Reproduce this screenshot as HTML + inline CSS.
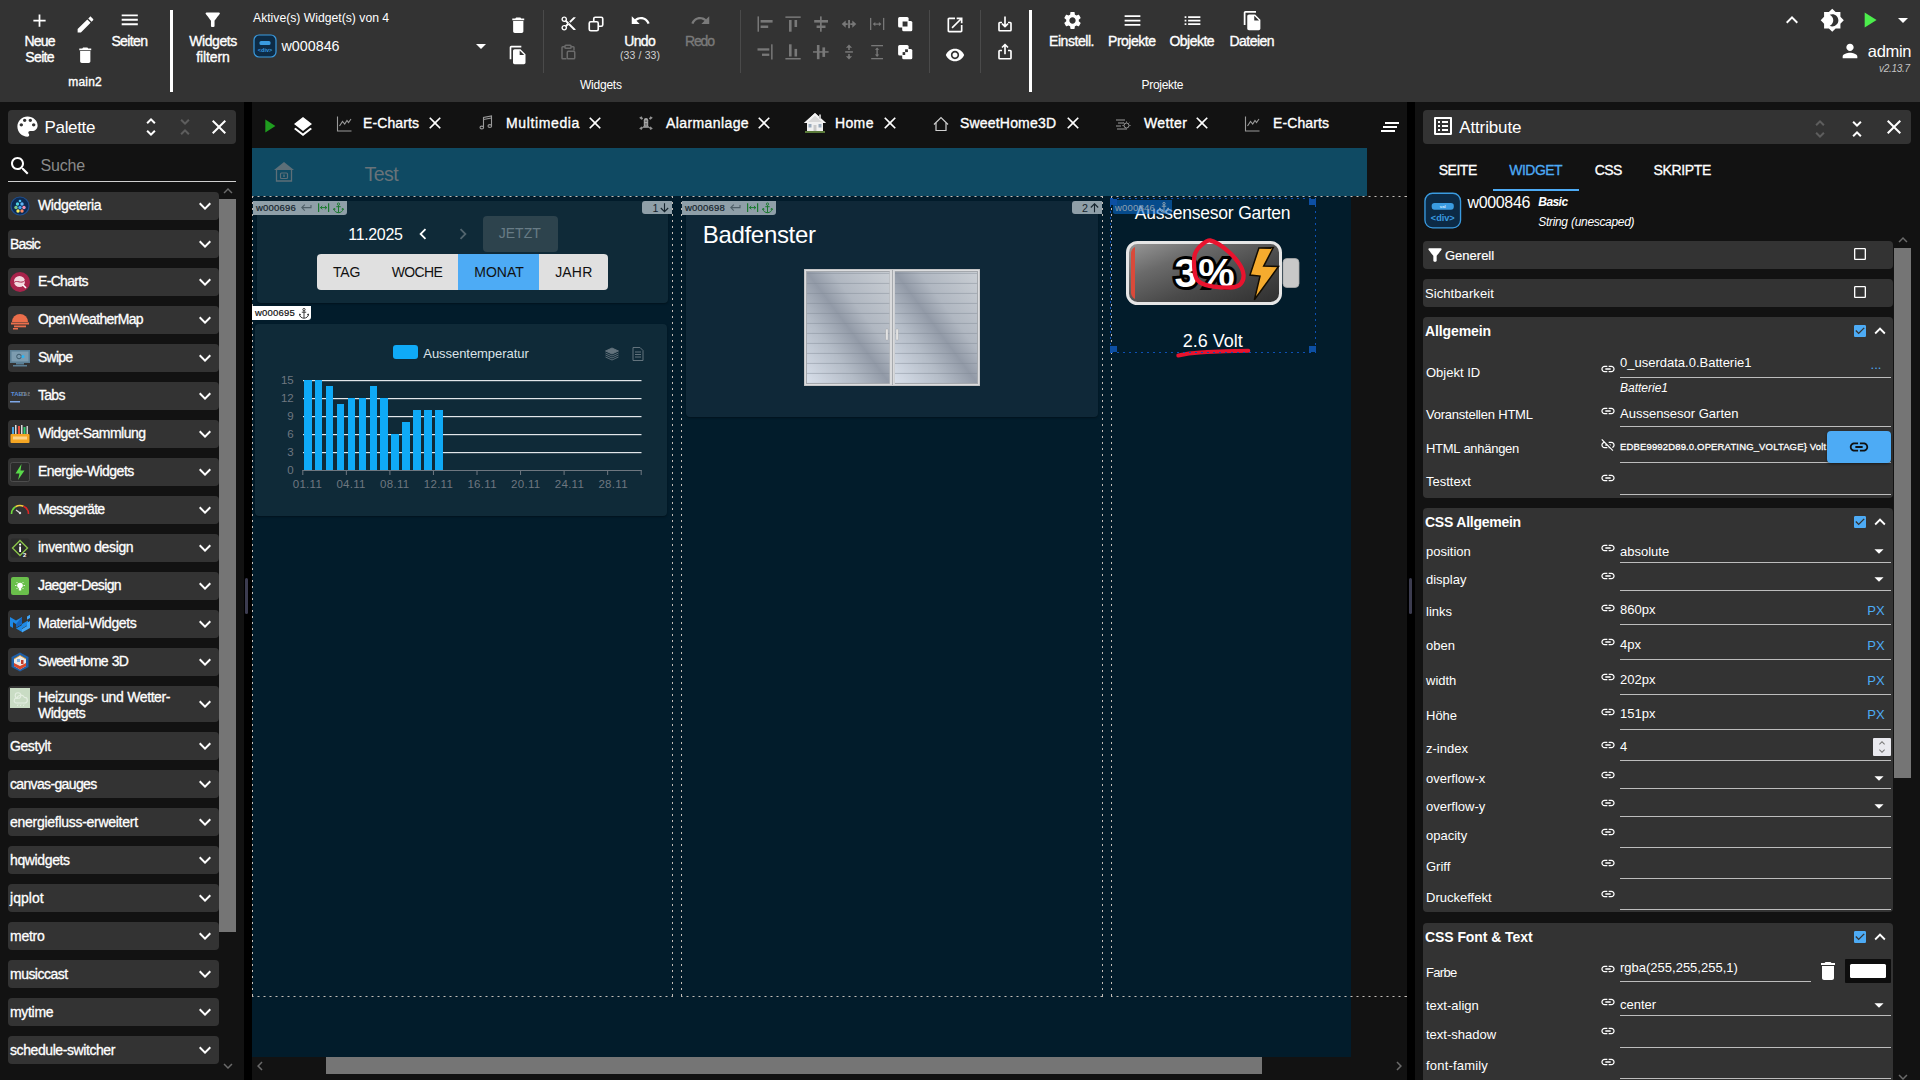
<!DOCTYPE html>
<html lang="de"><head><meta charset="utf-8"><title>vis editor</title>
<style>
html,body{margin:0;padding:0;background:#000;}
html{width:1920px;height:1080px;overflow:hidden;}
body{width:1920px;height:1080px;overflow:hidden;position:relative;font-family:"Liberation Sans",sans-serif;}
.t{position:absolute;white-space:nowrap;line-height:1;}
.i{position:absolute;display:block;}
.r{position:absolute;box-sizing:border-box;}
</style></head><body>
<div class="r" style="left:0px;top:0px;width:1920px;height:102px;background:#333333;"></div>
<svg class="i" style="left:29.200000000000003px;top:9.8px;" width="21" height="21" viewBox="0 0 24 24"><path fill="#fff" d="M19 13h-6v6h-2v-6H5v-2h6V5h2v6h6v2z"/></svg>
<span class="t" style="left:39.5665px;top:41.2px;font-size:14px;color:#ffffff;font-weight:400;transform:translate(-50%,-50%);letter-spacing:-0.867px;-webkit-text-stroke:0.35px #fff;">Neue</span>
<span class="t" style="left:39.669px;top:57.2px;font-size:14px;color:#ffffff;font-weight:400;transform:translate(-50%,-50%);letter-spacing:-0.662px;-webkit-text-stroke:0.35px #fff;">Seite</span>
<svg class="i" style="left:74.5px;top:14.0px;" width="21" height="21" viewBox="0 0 24 24"><path fill="#fff" d="M3 17.25V21h3.75L17.81 9.94l-3.75-3.75L3 17.25zM20.71 7.04c.39-.39.39-1.02 0-1.41l-2.34-2.34c-.39-.39-1.02-.39-1.41 0l-1.83 1.83 3.75 3.75 1.83-1.83z"/></svg>
<svg class="i" style="left:74.75px;top:44.75px;" width="20.5" height="20.5" viewBox="0 0 24 24"><path fill="#fff" d="M6 19c0 1.1.9 2 2 2h8c1.1 0 2-.9 2-2V7H6v12zM19 4h-3.5l-1-1h-5l-1 1H5v2h14V4z"/></svg>
<svg class="i" style="left:119.25px;top:9.25px;" width="21.5" height="21.5" viewBox="0 0 24 24"><path fill="#fff" d="M3 18h18v-2H3v2zm0-5h18v-2H3v2zm0-7v2h18V6H3z"/></svg>
<span class="t" style="left:129.392px;top:41.2px;font-size:14px;color:#ffffff;font-weight:400;transform:translate(-50%,-50%);letter-spacing:-0.616px;-webkit-text-stroke:0.35px #fff;">Seiten</span>
<span class="t" style="left:85.1015px;top:82px;font-size:12px;color:#ffffff;font-weight:400;transform:translate(-50%,-50%);letter-spacing:0.203px;-webkit-text-stroke:0.35px #fff;">main2</span>
<div class="r" style="left:170px;top:10px;width:3px;height:82px;background:#ffffff;"></div>
<svg class="i" style="left:201.95px;top:9.25px;" width="21.5" height="21.5" viewBox="0 0 24 24"><path fill="#fff" d="M4.25 5.61C6.27 8.2 10 13 10 13v6c0 .55.45 1 1 1h2c.55 0 1-.45 1-1v-6s3.72-4.8 5.74-7.39c.51-.66.04-1.61-.79-1.61H5.04c-.83 0-1.3.95-.79 1.61z"/></svg>
<span class="t" style="left:212.99499999999998px;top:41.2px;font-size:14px;color:#ffffff;font-weight:400;transform:translate(-50%,-50%);letter-spacing:-0.41px;-webkit-text-stroke:0.35px #fff;">Widgets</span>
<span class="t" style="left:212.9405px;top:57.2px;font-size:14px;color:#ffffff;font-weight:400;transform:translate(-50%,-50%);letter-spacing:-0.119px;-webkit-text-stroke:0.35px #fff;">filtern</span>
<span class="t" style="left:253px;top:18px;font-size:12.2px;color:#ffffff;font-weight:400;transform:translate(0,-50%);">Aktive(s) Widget(s) von 4</span>
<svg class="i" style="left:253px;top:34px;" width="24" height="24" viewBox="0 0 24 24"><rect x="1" y="1" width="22" height="22" rx="5" fill="#0d2b45" stroke="#3a9be0" stroke-width="1.2"/><rect x="6.5" y="7" width="11" height="4" rx="1.5" fill="#3a9be0"/><text x="12" y="18" font-size="5.5" font-weight="700" fill="#3a9be0" text-anchor="middle" font-family="Liberation Sans, sans-serif">&lt;div&gt;</text></svg>
<span class="t" style="left:281.5px;top:46px;font-size:14.3px;color:#ffffff;font-weight:400;transform:translate(0,-50%);">w000846</span>
<svg class="i" style="left:468.6px;top:34.0px;" width="24" height="24" viewBox="0 0 24 24"><path fill="#fff" d="M7 10l5 5 5-5z"/></svg>
<svg class="i" style="left:508.04999999999995px;top:14.75px;" width="20.5" height="20.5" viewBox="0 0 24 24"><path fill="#fff" d="M6 19c0 1.1.9 2 2 2h8c1.1 0 2-.9 2-2V7H6v12zM19 4h-3.5l-1-1h-5l-1 1H5v2h14V4z"/></svg>
<svg class="i" style="left:508.20000000000005px;top:44.5px;" width="20" height="20" viewBox="0 0 24 24"><path fill="#fff" d="M16 1H4c-1.1 0-2 .9-2 2v14h2V3h12V1zm-1 4l6 6v10c0 1.1-.9 2-2 2H7.99C6.89 23 6 22.1 6 21l.01-14c0-1.1.89-2 1.99-2h7zm-1 7h5.5L14 6.5V12z"/></svg>
<div class="r" style="left:543px;top:10px;width:1px;height:63px;background:#4a4a4a;"></div>
<svg class="i" style="left:559.6px;top:15.3px;" width="17" height="17" viewBox="0 0 24 24"><path fill="#fff" d="M9.64 7.64c.23-.5.36-1.05.36-1.64 0-2.21-1.79-4-4-4S2 3.79 2 6s1.79 4 4 4c.59 0 1.14-.13 1.64-.36L10 12l-2.36 2.36C7.14 14.13 6.59 14 6 14c-2.21 0-4 1.79-4 4s1.79 4 4 4 4-1.79 4-4c0-.59-.13-1.14-.36-1.64L12 14l7 7h3v-1L9.64 7.64zM6 8c-1.1 0-2-.89-2-2s.9-2 2-2 2 .89 2 2-.9 2-2 2zm0 12c-1.1 0-2-.89-2-2s.9-2 2-2 2 .89 2 2-.9 2-2 2zm6-7.5c-.28 0-.5-.22-.5-.5s.22-.5.5-.5.5.22.5.5-.22.5-.5.5zM19 3l-6 6 2 2 7-7V3z"/></svg>
<svg class="i" style="left:587px;top:15px;" width="18" height="18" viewBox="0 0 24 24"><rect x="9" y="3" width="12" height="12" rx="2" fill="none" stroke="#fff" stroke-width="2.2"/><rect x="3" y="9" width="12" height="12" rx="2" fill="#333" stroke="#fff" stroke-width="2.2"/></svg>
<svg class="i" style="left:558.7px;top:43px;" width="18" height="18" viewBox="0 0 24 24"><path d="M8 5H5a1 1 0 0 0-1 1v14a1 1 0 0 0 1 1h5" fill="none" stroke="#6b6b6b" stroke-width="2"/><path d="M16 5h3a1 1 0 0 1 1 1v4" fill="none" stroke="#6b6b6b" stroke-width="2"/><rect x="8" y="3" width="8" height="4" rx="1" fill="none" stroke="#6b6b6b" stroke-width="2"/><rect x="11" y="11" width="10" height="10" rx="1.5" fill="none" stroke="#6b6b6b" stroke-width="2"/></svg>
<svg class="i" style="left:629.5px;top:10.0px;" width="21" height="21" viewBox="0 0 24 24"><path fill="#fff" d="M12.5 8c-2.65 0-5.05.99-6.9 2.6L2 7v9h9l-3.62-3.62c1.39-1.16 3.16-1.88 5.12-1.88 3.54 0 6.55 2.31 7.6 5.5l2.37-.78C21.08 11.03 17.15 8 12.5 8z"/></svg>
<span class="t" style="left:639.6915px;top:41.2px;font-size:14px;color:#ffffff;font-weight:400;transform:translate(-50%,-50%);letter-spacing:-0.617px;-webkit-text-stroke:0.35px #fff;">Undo</span>
<span class="t" style="left:640.0665px;top:55px;font-size:10.5px;color:#d0d0d0;font-weight:400;transform:translate(-50%,-50%);letter-spacing:0.133px;">(33 / 33)</span>
<svg class="i" style="left:689.5px;top:10.0px;" width="21" height="21" viewBox="0 0 24 24"><path fill="#7a7a7a" d="M18.4 10.6C16.55 8.99 14.15 8 11.5 8c-4.65 0-8.58 3.03-9.96 7.22L3.9 16c1.05-3.19 4.05-5.5 7.6-5.5 1.95 0 3.73.72 5.12 1.88L13 16h9V7l-3.6 3.6z"/></svg>
<span class="t" style="left:699.4415px;top:41.2px;font-size:14px;color:#7a7a7a;font-weight:400;transform:translate(-50%,-50%);letter-spacing:-1.117px;-webkit-text-stroke:0.35px #7a7a7a;">Redo</span>
<span class="t" style="left:600.8825px;top:85px;font-size:12px;color:#ffffff;font-weight:400;transform:translate(-50%,-50%);letter-spacing:-0.235px;">Widgets</span>
<div class="r" style="left:740px;top:10px;width:1px;height:63px;background:#4a4a4a;"></div>
<svg class="i" style="left:0;top:0" width="1920" height="70" viewBox="0 0 1920 70"><rect x="757.5" y="16.4" width="1.50" height="15.30" fill="#787878"/><rect x="760.6" y="20" width="12.00" height="2.60" fill="#787878"/><rect x="760.6" y="25.5" width="7.60" height="2.50" fill="#787878"/><rect x="785.4" y="16.4" width="15.30" height="1.50" fill="#787878"/><rect x="789" y="20" width="2.60" height="11.70" fill="#787878"/><rect x="794.5" y="20" width="2.60" height="7.00" fill="#787878"/><rect x="820" y="16.4" width="1.70" height="15.30" fill="#787878"/><rect x="814.2" y="20" width="13.80" height="2.60" fill="#787878"/><rect x="816.6" y="25.5" width="8.90" height="2.50" fill="#787878"/><rect x="848.1" y="20" width="1.90" height="8.20" fill="#787878"/><path d="M841.7 24.1l4-3.600v2.800h2v1.600h-2v2.800zM856.300 24.100l-4-3.600v2.800h-2v1.600h2v2.800z" fill="#787878"/><rect x="870" y="17.9" width="1.30" height="12.10" fill="#787878"/><rect x="883" y="17.9" width="1.30" height="12.10" fill="#787878"/><path d="M872.700 24.100l2.600-2.200v1.600h3.600v-1.600l2.600 2.200-2.600 2.200v-1.600h-3.600v1.600z" fill="#787878"/><rect x="771.1" y="44.3" width="1.50" height="15.20" fill="#787878"/><rect x="757.5" y="48.3" width="11.80" height="2.30" fill="#787878"/><rect x="762" y="53.6" width="7.30" height="2.30" fill="#787878"/><rect x="785.4" y="58" width="15.30" height="1.50" fill="#787878"/><rect x="789" y="44.3" width="2.60" height="12.20" fill="#787878"/><rect x="794.5" y="48.9" width="2.60" height="7.60" fill="#787878"/><rect x="813" y="51.2" width="15.60" height="1.50" fill="#787878"/><rect x="816.9" y="45" width="2.60" height="14.20" fill="#787878"/><rect x="822.4" y="47.4" width="2.70" height="9.50" fill="#787878"/><rect x="845.2" y="51.2" width="7.70" height="1.50" fill="#787878"/><path d="M849 44.500l-3.100 3.300h2.300v2.200h1.600v-2.200h2.300zM849 59.500l-3.100-3.300h2.300v-2.200h1.600v2.200h2.300z" fill="#787878"/><rect x="871.2" y="45" width="11.80" height="1.30" fill="#787878"/><rect x="871.2" y="58" width="11.80" height="1.30" fill="#787878"/><path d="M877.100 47.400l-2.200 2.400h1.500v4.700h-1.500l2.200 2.400 2.200-2.400h-1.500v-4.700h1.500z" fill="#787878"/><rect x="898.1" y="16.900" width="10.500" height="10.600" rx="1.500" fill="#fff"/><rect x="902.2" y="21.100" width="10.100" height="10.100" rx="1.500" fill="#fff"/><rect x="902.6" y="21.500" width="4.900" height="5" fill="#333"/><rect x="898.1" y="45" width="10.500" height="10.600" rx="1.500" fill="#fff"/><rect x="902.2" y="48.900" width="10.100" height="10.300" rx="1.500" fill="#fff"/><rect x="905.100" y="49.300" width="2.800" height="2.800" fill="#333"/><rect x="902.600" y="52.100" width="2.600" height="2.900" fill="#333"/></svg>
<div class="r" style="left:929px;top:10px;width:1px;height:63px;background:#4a4a4a;"></div>
<svg class="i" style="left:945.1px;top:14.899999999999999px;" width="20" height="20" viewBox="0 0 24 24"><path fill="#fff" d="M19 19H5V5h7V3H5c-1.11 0-2 .9-2 2v14c0 1.1.89 2 2 2h14c1.1 0 2-.9 2-2v-7h-2v7zM14 3v2h3.59l-9.83 9.83 1.41 1.41L19 6.41V10h2V3h-7z"/></svg>
<svg class="i" style="left:945.0px;top:45.0px;" width="20" height="20" viewBox="0 0 24 24"><path fill="#fff" d="M12 4.5C7 4.5 2.73 7.61 1 12c1.73 4.39 6 7.5 11 7.5s9.27-3.11 11-7.5c-1.73-4.39-6-7.5-11-7.5zM12 17c-2.76 0-5-2.24-5-5s2.24-5 5-5 5 2.24 5 5-2.24 5-5 5zm0-8c-1.66 0-3 1.34-3 3s1.34 3 3 3 3-1.34 3-3-1.34-3-3-3z"/></svg>
<div class="r" style="left:980px;top:10px;width:1px;height:63px;background:#4a4a4a;"></div>
<svg class="i" style="left:996px;top:15px;" width="18" height="18" viewBox="0 0 24 24"><g fill="none" stroke="#fff" stroke-width="2.2" stroke-linejoin="round"><path d="M8 10H5a1 1 0 0 0-1 1v9a1 1 0 0 0 1 1h14a1 1 0 0 0 1-1v-9a1 1 0 0 0-1-1h-3"/><path d="M12 2v13M8 11.500l4 4 4-4"/></g></svg>
<svg class="i" style="left:996px;top:43px;" width="18" height="18" viewBox="0 0 24 24"><g fill="none" stroke="#fff" stroke-width="2.2" stroke-linejoin="round"><path d="M8 10H5a1 1 0 0 0-1 1v9a1 1 0 0 0 1 1h14a1 1 0 0 0 1-1v-9a1 1 0 0 0-1-1h-3"/><path d="M12 15V2.500M8 6l4-4 4 4"/></g></svg>
<div class="r" style="left:1029px;top:10px;width:3px;height:82px;background:#ffffff;"></div>
<svg class="i" style="left:1061.8px;top:9.5px;" width="21" height="21" viewBox="0 0 24 24"><path fill="#fff" d="M19.14 12.94c.04-.3.06-.61.06-.94 0-.32-.02-.64-.07-.94l2.03-1.58c.18-.14.23-.41.12-.61l-1.92-3.32c-.12-.22-.37-.29-.59-.22l-2.39.96c-.5-.38-1.03-.7-1.62-.94l-.36-2.54c-.04-.24-.24-.41-.48-.41h-3.84c-.24 0-.43.17-.47.41l-.36 2.54c-.59.24-1.13.57-1.62.94l-2.39-.96c-.22-.08-.47 0-.59.22L2.74 8.87c-.12.21-.08.47.12.61l2.03 1.58c-.05.3-.09.63-.09.94s.02.64.07.94l-2.03 1.58c-.18.14-.23.41-.12.61l1.92 3.32c.12.22.37.29.59.22l2.39-.96c.5.38 1.03.7 1.62.94l.36 2.54c.05.24.24.41.48.41h3.84c.24 0 .44-.17.47-.41l.36-2.54c.59-.24 1.13-.56 1.62-.94l2.39.96c.22.08.47 0 .59-.22l1.92-3.32c.12-.22.07-.47-.12-.61l-2.01-1.58zM12 15.6c-1.98 0-3.6-1.62-3.6-3.6s1.62-3.6 3.6-3.6 3.6 1.62 3.6 3.6-1.62 3.6-3.6 3.6z"/></svg>
<span class="t" style="left:1071.5765px;top:41.2px;font-size:14px;color:#ffffff;font-weight:400;transform:translate(-50%,-50%);letter-spacing:-0.447px;-webkit-text-stroke:0.35px #fff;">Einstell.</span>
<svg class="i" style="left:1121.5px;top:9.5px;" width="21" height="21" viewBox="0 0 24 24"><path fill="#fff" d="M3 18h18v-2H3v2zm0-5h18v-2H3v2zm0-7v2h18V6H3z"/></svg>
<span class="t" style="left:1131.7525px;top:41.2px;font-size:14px;color:#ffffff;font-weight:400;transform:translate(-50%,-50%);letter-spacing:-0.495px;-webkit-text-stroke:0.35px #fff;">Projekte</span>
<svg class="i" style="left:1181.5px;top:9.5px;" width="21" height="21" viewBox="0 0 24 24"><path fill="#fff" d="M3 13h2v-2H3v2zm0 4h2v-2H3v2zm0-8h2V7H3v2zm4 4h14v-2H7v2zm0 4h14v-2H7v2zM7 7v2h14V7H7z"/></svg>
<span class="t" style="left:1191.7395px;top:41.2px;font-size:14px;color:#ffffff;font-weight:400;transform:translate(-50%,-50%);letter-spacing:-0.521px;-webkit-text-stroke:0.35px #fff;">Objekte</span>
<svg class="i" style="left:1241.5px;top:9.5px;" width="21" height="21" viewBox="0 0 24 24"><path fill="#fff" d="M16 1H4c-1.1 0-2 .9-2 2v14h2V3h12V1zm-1 4l6 6v10c0 1.1-.9 2-2 2H7.99C6.89 23 6 22.1 6 21l.01-14c0-1.1.89-2 1.99-2h7zm-1 7h5.5L14 6.5V12z"/></svg>
<span class="t" style="left:1251.7315px;top:41.2px;font-size:14px;color:#ffffff;font-weight:400;transform:translate(-50%,-50%);letter-spacing:-0.537px;-webkit-text-stroke:0.35px #fff;">Dateien</span>
<span class="t" style="left:1162.3485px;top:85px;font-size:12px;color:#ffffff;font-weight:400;transform:translate(-50%,-50%);letter-spacing:-0.303px;">Projekte</span>
<svg class="i" style="left:1780.0px;top:8.0px;" width="24" height="24" viewBox="0 0 24 24"><path fill="#fff" d="M7.41 15.41L12 10.83l4.59 4.58L18 14l-6-6-6 6z"/></svg>
<svg class="i" style="left:1819.75px;top:7.75px;" width="24.5" height="24.5" viewBox="0 0 24 24"><path fill="#fff" d="M20 8.69V4h-4.69L12 .69 8.69 4H4v4.69L.69 12 4 15.31V20h4.69L12 23.31 15.31 20H20v-4.69L23.31 12 20 8.69zM12 18c-.89 0-1.74-.2-2.5-.55C11.56 16.5 13 14.42 13 12s-1.44-4.5-3.5-5.45C10.26 6.2 11.11 6 12 6c3.31 0 6 2.69 6 6s-2.69 6-6 6z"/></svg>
<svg class="i" style="left:1856.0px;top:7.0px;" width="26" height="26" viewBox="0 0 24 24"><path fill="#4cee4c" d="M8 5v14l11-7z"/></svg>
<svg class="i" style="left:1890.7px;top:8.0px;" width="24" height="24" viewBox="0 0 24 24"><path fill="#fff" d="M7 10l5 5 5-5z"/></svg>
<svg class="i" style="left:1839.0px;top:40.3px;" width="22" height="22" viewBox="0 0 24 24"><path fill="#fff" d="M12 12c2.21 0 4-1.79 4-4s-1.79-4-4-4-4 1.79-4 4 1.79 4 4 4zm0 2c-2.67 0-8 1.34-8 4v2h16v-2c0-2.66-5.33-4-8-4z"/></svg>
<span class="t" style="left:1911.0520000000001px;top:51px;font-size:16.5px;color:#ffffff;font-weight:400;transform:translate(-100%,-50%);letter-spacing:-0.348px;">admin</span>
<span class="t" style="left:1909.7px;top:68.8px;font-size:10px;color:#c4c4c4;font-weight:400;transform:translate(-100%,-50%);letter-spacing:-0.3px;font-style:italic;">v2.13.7</span>
<div class="r" style="left:0px;top:102px;width:244px;height:978px;background:#121212;"></div>
<div class="r" style="left:244px;top:102px;width:8px;height:978px;background:#000;"></div>
<div class="r" style="left:8px;top:110px;width:228px;height:34px;background:#333333;border-radius:4px;"></div>
<svg class="i" style="left:14.3px;top:112.5px;" width="27" height="27" viewBox="0 0 24 24"><path fill="#fff" d="M12 3c-4.97 0-9 4.03-9 9s4.03 9 9 9c.83 0 1.5-.67 1.5-1.5 0-.39-.15-.74-.39-1.01-.23-.26-.38-.61-.38-.99 0-.83.67-1.5 1.5-1.5H16c2.76 0 5-2.24 5-5 0-4.42-4.03-8-9-8zm-5.5 9c-.83 0-1.5-.67-1.5-1.5S5.67 9 6.5 9 8 9.67 8 10.5 7.33 12 6.5 12zm3-4C8.67 8 8 7.33 8 6.5S8.67 5 9.5 5s1.5.67 1.5 1.5S10.33 8 9.5 8zm5 0c-.83 0-1.5-.67-1.5-1.5S13.67 5 14.5 5s1.5.67 1.5 1.5S15.33 8 14.5 8zm3 4c-.83 0-1.5-.67-1.5-1.5S16.670 9 17.5 9s1.5.67 1.5 1.5-.67 1.5-1.5 1.5z"/></svg>
<span class="t" style="left:44.5px;top:127px;font-size:17px;color:#fff;font-weight:400;transform:translate(0,-50%);letter-spacing:-0.332px;">Palette</span>
<svg class="i" style="left:139.0px;top:115.0px;" width="24" height="24" viewBox="0 0 24 24"><path fill="#fff" d="M12 5.83L15.17 9l1.41-1.41L12 3 7.41 7.59 8.83 9 12 5.83zm0 12.34L8.83 15l-1.41 1.41L12 21l4.59-4.59L15.17 15 12 18.17z"/></svg>
<svg class="i" style="left:173.0px;top:115.0px;" width="24" height="24" viewBox="0 0 24 24"><path fill="#5e5e5e" d="M7.41 18.59L8.83 20 12 16.83 15.17 20l1.41-1.41L12 14l-4.59 4.59zm9.18-13.18L15.17 4 12 7.17 8.83 4 7.41 5.41 12 10l4.59-4.59z"/></svg>
<svg class="i" style="left:207.0px;top:115.0px;" width="24" height="24" viewBox="0 0 24 24"><path fill="#fff" d="M19 6.41L17.59 5 12 10.59 6.41 5 5 6.41 10.59 12 5 17.59 6.41 19 12 13.41 17.59 19 19 17.59 13.41 12z"/></svg>
<svg class="i" style="left:7.699999999999999px;top:153.8px;" width="24" height="24" viewBox="0 0 24 24"><path fill="#fff" d="M15.5 14h-.79l-.28-.27C15.41 12.59 16 11.11 16 9.5 16 5.91 13.09 3 9.5 3S3 5.91 3 9.5 5.91 16 9.5 16c1.61 0 3.09-.59 4.23-1.57l.27.28v.79l5 4.99L20.49 19l-4.99-5zm-6 0C7.01 14 5 11.99 5 9.500S7.01 5 9.5 5 14 7.01 14 9.5 11.99 14 9.5 14z"/></svg>
<span class="t" style="left:40.5px;top:165.7px;font-size:16px;color:#8a8a8a;font-weight:400;transform:translate(0,-50%);letter-spacing:-0.194px;">Suche</span>
<div class="r" style="left:8px;top:181px;width:228px;height:1px;background:#d0d0d0;"></div>
<svg class="i" style="left:218.5px;top:181.5px;" width="18" height="18" viewBox="0 0 24 24"><path fill="#6a6a6a" d="M7.41 15.41L12 10.83l4.59 4.58L18 14l-6-6-6 6z"/></svg>
<div class="r" style="left:219px;top:199px;width:17px;height:733px;background:#757575;"></div>
<svg class="i" style="left:218.5px;top:1057.0px;" width="18" height="18" viewBox="0 0 24 24"><path fill="#6a6a6a" d="M16.59 8.59L12 13.17 7.41 8.59 6 10l6 6 6-6z"/></svg>
<div class="r" style="left:245px;top:578px;width:3px;height:36px;background:#3c3c50;border-radius:2px;"></div>
<div class="r" style="left:8px;top:192px;width:211px;height:28px;background:#333333;border-radius:4px;"></div>
<svg class="i" style="left:10px;top:196px;" width="20" height="20" viewBox="0 0 20 20"><circle cx="10" cy="10" r="9" fill="#0c2a52" stroke="#1f4f8f" stroke-width="1.2"/><circle cx="10" cy="5" r="1.3" fill="#4fc3f7"/><circle cx="7.500" cy="8" r="1.7" fill="#4dd0e1"/><circle cx="12" cy="8" r="1.700" fill="#64b5f6"/><circle cx="6" cy="11.500" r="1.700" fill="#81c784"/><circle cx="10" cy="11.500" r="1.700" fill="#42a5f5"/><circle cx="14" cy="11.500" r="1.700" fill="#f48fb1"/><circle cx="8" cy="15" r="1.700" fill="#ffee58"/><circle cx="12" cy="15" r="1.700" fill="#ff8a65"/></svg>
<span class="t" style="left:38px;top:204.5px;font-size:14px;color:#fff;font-weight:400;transform:translate(0,-50%);letter-spacing:-0.367px;-webkit-text-stroke:0.3px #fff;">Widgeteria</span>
<svg class="i" style="left:193.0px;top:194.0px;" width="24" height="24" viewBox="0 0 24 24"><path fill="#fff" d="M16.59 8.59L12 13.17 7.41 8.59 6 10l6 6 6-6z"/></svg>
<div class="r" style="left:8px;top:230px;width:211px;height:28px;background:#333333;border-radius:4px;"></div>
<span class="t" style="left:10px;top:243.9px;font-size:14px;color:#fff;font-weight:400;transform:translate(0,-50%);letter-spacing:-0.847px;-webkit-text-stroke:0.3px #fff;">Basic</span>
<svg class="i" style="left:193.0px;top:232.0px;" width="24" height="24" viewBox="0 0 24 24"><path fill="#fff" d="M16.59 8.59L12 13.17 7.41 8.59 6 10l6 6 6-6z"/></svg>
<div class="r" style="left:8px;top:268px;width:211px;height:28px;background:#333333;border-radius:4px;"></div>
<svg class="i" style="left:10px;top:272px;" width="20" height="20" viewBox="0 0 20 20"><circle cx="10" cy="10" r="10" fill="#a8234b"/><circle cx="9.500" cy="9.500" r="5.500" fill="#f3d9df"/><path d="M4 10.500c3-3 7 2 11-2" stroke="#a8234b" stroke-width="1" fill="none"/><path d="M13 13l3 3" stroke="#fff" stroke-width="1.600"/></svg>
<span class="t" style="left:38px;top:280.5px;font-size:14px;color:#fff;font-weight:400;transform:translate(0,-50%);letter-spacing:-0.686px;-webkit-text-stroke:0.3px #fff;">E-Charts</span>
<svg class="i" style="left:193.0px;top:270.0px;" width="24" height="24" viewBox="0 0 24 24"><path fill="#fff" d="M16.59 8.59L12 13.17 7.41 8.59 6 10l6 6 6-6z"/></svg>
<div class="r" style="left:8px;top:306px;width:211px;height:28px;background:#333333;border-radius:4px;"></div>
<svg class="i" style="left:10px;top:310px;" width="20" height="20" viewBox="0 0 20 20"><path d="M2 12a8 8 0 0 1 16 0z" fill="#eb6e4b"/><rect x="1" y="12.500" width="18" height="2" fill="#eb6e4b"/><rect x="4" y="15.500" width="12" height="1.800" fill="#eb6e4b"/><rect x="3" y="18" width="5" height="1.500" fill="#eb6e4b"/></svg>
<span class="t" style="left:38px;top:318.5px;font-size:14px;color:#fff;font-weight:400;transform:translate(0,-50%);letter-spacing:-0.653px;-webkit-text-stroke:0.3px #fff;">OpenWeatherMap</span>
<svg class="i" style="left:193.0px;top:308.0px;" width="24" height="24" viewBox="0 0 24 24"><path fill="#fff" d="M16.59 8.59L12 13.17 7.41 8.59 6 10l6 6 6-6z"/></svg>
<div class="r" style="left:8px;top:344px;width:211px;height:28px;background:#333333;border-radius:4px;"></div>
<svg class="i" style="left:10px;top:348px;" width="20" height="20" viewBox="0 0 20 20"><rect x="0" y="2" width="20" height="13" fill="#5b7f95"/><rect x="1.500" y="3.500" width="17" height="10" fill="#7d9caf"/><circle cx="9" cy="8.500" r="2.300" fill="none" stroke="#3d5a6c" stroke-width="1"/><circle cx="13" cy="8.500" r="1.500" fill="#29b6f6"/><rect x="6" y="15" width="8" height="1.500" fill="#5b7f95"/><rect x="3" y="17" width="14" height="1.500" fill="#5b7f95"/></svg>
<span class="t" style="left:38px;top:356.5px;font-size:14px;color:#fff;font-weight:400;transform:translate(0,-50%);letter-spacing:-0.777px;-webkit-text-stroke:0.3px #fff;">Swipe</span>
<svg class="i" style="left:193.0px;top:346.0px;" width="24" height="24" viewBox="0 0 24 24"><path fill="#fff" d="M16.59 8.59L12 13.17 7.41 8.59 6 10l6 6 6-6z"/></svg>
<div class="r" style="left:8px;top:382px;width:211px;height:28px;background:#333333;border-radius:4px;"></div>
<svg class="i" style="left:10px;top:386px;" width="20" height="20" viewBox="0 0 20 20"><g font-family="Liberation Sans, sans-serif" font-size="6" font-weight="700"><text x="1" y="10" fill="#5b8dd6">TAB1</text></g><rect x="10" y="4.500" width="9" height="6" fill="none"/><g font-family="Liberation Sans, sans-serif" font-size="5.500" font-weight="700"><text x="10.500" y="10" fill="#7a7a7a">TAB</text></g><rect x="0" y="15" width="10" height="1.500" fill="#7fa8e8"/></svg>
<span class="t" style="left:38px;top:394.5px;font-size:14px;color:#fff;font-weight:400;transform:translate(0,-50%);letter-spacing:-0.706px;-webkit-text-stroke:0.3px #fff;">Tabs</span>
<svg class="i" style="left:193.0px;top:384.0px;" width="24" height="24" viewBox="0 0 24 24"><path fill="#fff" d="M16.59 8.59L12 13.17 7.41 8.59 6 10l6 6 6-6z"/></svg>
<div class="r" style="left:8px;top:420px;width:211px;height:28px;background:#333333;border-radius:4px;"></div>
<svg class="i" style="left:10px;top:424px;" width="20" height="20" viewBox="0 0 20 20"><rect x="0.500" y="10" width="19" height="9" rx="1" fill="#f5a623"/><rect x="3" y="12.500" width="14" height="3" fill="#fbd38a"/><rect x="2" y="3" width="2" height="7" fill="#4aa3df"/><rect x="5" y="1" width="1.500" height="9" fill="#ddd"/><rect x="8" y="2" width="2" height="8" fill="#e74c3c"/><rect x="11" y="1" width="1.500" height="9" fill="#ddd"/><rect x="13.500" y="3" width="2" height="7" fill="#2ecc71"/><rect x="16.500" y="2" width="1.500" height="8" fill="#ccc"/></svg>
<span class="t" style="left:38px;top:432.5px;font-size:14px;color:#fff;font-weight:400;transform:translate(0,-50%);letter-spacing:-0.51px;-webkit-text-stroke:0.3px #fff;">Widget-Sammlung</span>
<svg class="i" style="left:193.0px;top:422.0px;" width="24" height="24" viewBox="0 0 24 24"><path fill="#fff" d="M16.59 8.59L12 13.17 7.41 8.59 6 10l6 6 6-6z"/></svg>
<div class="r" style="left:8px;top:458px;width:211px;height:28px;background:#333333;border-radius:4px;"></div>
<svg class="i" style="left:10px;top:462px;" width="20" height="20" viewBox="0 0 20 20"><rect x="0.500" y="0.500" width="19" height="19" rx="2" fill="#2b2b2b" stroke="#555" stroke-width="0.800"/><path d="M11.500 2L5.500 11.500h4L8 18l6.500-9.500h-4z" fill="#59d94a"/></svg>
<span class="t" style="left:38px;top:470.5px;font-size:14px;color:#fff;font-weight:400;transform:translate(0,-50%);letter-spacing:-0.516px;-webkit-text-stroke:0.3px #fff;">Energie-Widgets</span>
<svg class="i" style="left:193.0px;top:460.0px;" width="24" height="24" viewBox="0 0 24 24"><path fill="#fff" d="M16.59 8.59L12 13.17 7.41 8.59 6 10l6 6 6-6z"/></svg>
<div class="r" style="left:8px;top:496px;width:211px;height:28px;background:#333333;border-radius:4px;"></div>
<svg class="i" style="left:10px;top:500px;" width="20" height="20" viewBox="0 0 20 20"><path d="M1.500 14a8.500 8.500 0 0 1 4-7.200" stroke="#6fdc3c" stroke-width="1.600" fill="none"/><path d="M5.500 6.800a8.500 8.500 0 0 1 8-.5" stroke="#f4d03f" stroke-width="1.600" fill="none"/><path d="M13.500 6.300a8.500 8.500 0 0 1 5 7.700" stroke="#e02424" stroke-width="1.600" fill="none"/><path d="M10 13L6 10" stroke="#ddd" stroke-width="1.200"/><circle cx="10" cy="13" r="1.200" fill="#ddd"/></svg>
<span class="t" style="left:38px;top:508.5px;font-size:14px;color:#fff;font-weight:400;transform:translate(0,-50%);letter-spacing:-0.665px;-webkit-text-stroke:0.3px #fff;">Messgeräte</span>
<svg class="i" style="left:193.0px;top:498.0px;" width="24" height="24" viewBox="0 0 24 24"><path fill="#fff" d="M16.59 8.59L12 13.17 7.41 8.59 6 10l6 6 6-6z"/></svg>
<div class="r" style="left:8px;top:534px;width:211px;height:28px;background:#333333;border-radius:4px;"></div>
<svg class="i" style="left:10px;top:538px;" width="20" height="20" viewBox="0 0 20 20"><rect x="0.500" y="0.500" width="19" height="19" rx="2" fill="#2b2b2b"/><path d="M10 2.500L17.500 10 10 17.500 2.500 10z" fill="none" stroke="#8bc34a" stroke-width="1.400"/><rect x="9.200" y="8.500" width="1.800" height="5.500" fill="#fff"/><circle cx="10.100" cy="6.600" r="1.100" fill="#fff"/><text x="13" y="18.500" font-size="6" font-weight="700" fill="#fff" font-family="Liberation Sans, sans-serif">2</text></svg>
<span class="t" style="left:38px;top:546.5px;font-size:14px;color:#fff;font-weight:400;transform:translate(0,-50%);letter-spacing:-0.366px;-webkit-text-stroke:0.3px #fff;word-spacing:0.343px;">inventwo design</span>
<svg class="i" style="left:193.0px;top:536.0px;" width="24" height="24" viewBox="0 0 24 24"><path fill="#fff" d="M16.59 8.59L12 13.17 7.41 8.59 6 10l6 6 6-6z"/></svg>
<div class="r" style="left:8px;top:572px;width:211px;height:28px;background:#333333;border-radius:4px;"></div>
<svg class="i" style="left:10px;top:576px;" width="20" height="20" viewBox="0 0 20 20"><rect x="1" y="1" width="18" height="18" rx="2" fill="#6abf4b"/><circle cx="10" cy="9.500" r="2.800" fill="#fff"/><rect x="8.800" y="11.500" width="2.400" height="3" fill="#fff"/><path d="M5 9.500h1.500M13.500 9.500H15M6.500 6l1 1M13.500 6l-1 1M6.500 13l1-1M13.500 13l-1-1" stroke="#fff" stroke-width="0.800"/></svg>
<span class="t" style="left:38px;top:584.5px;font-size:14px;color:#fff;font-weight:400;transform:translate(0,-50%);letter-spacing:-0.619px;-webkit-text-stroke:0.3px #fff;">Jaeger-Design</span>
<svg class="i" style="left:193.0px;top:574.0px;" width="24" height="24" viewBox="0 0 24 24"><path fill="#fff" d="M16.59 8.59L12 13.17 7.41 8.59 6 10l6 6 6-6z"/></svg>
<div class="r" style="left:8px;top:610px;width:211px;height:28px;background:#333333;border-radius:4px;"></div>
<svg class="i" style="left:10px;top:614px;" width="20" height="20" viewBox="0 0 20 20"><path d="M0 3l6 3.500L12 3v7l-6 3.500V10L3 8.300V14L0 12.300z" fill="#1e88e5"/><path d="M12 3v7l-6 3.500V10z" fill="#1565c0"/><path d="M12 10l6-3.500V11l-6 3.500L9 12.800l3-1.800zM12 14.500V18l-6-3.500 3-1.700z" fill="#1e88e5"/><path d="M17 2.500l3-1.700V4l-3 1.700zM20 7v7l-8 4.500V15l5-2.900V8.700z" fill="#42a5f5"/></svg>
<span class="t" style="left:38px;top:622.5px;font-size:14px;color:#fff;font-weight:400;transform:translate(0,-50%);letter-spacing:-0.424px;-webkit-text-stroke:0.3px #fff;">Material-Widgets</span>
<svg class="i" style="left:193.0px;top:612.0px;" width="24" height="24" viewBox="0 0 24 24"><path fill="#fff" d="M16.59 8.59L12 13.17 7.41 8.59 6 10l6 6 6-6z"/></svg>
<div class="r" style="left:8px;top:648px;width:211px;height:28px;background:#333333;border-radius:4px;"></div>
<svg class="i" style="left:10px;top:652px;" width="20" height="20" viewBox="0 0 20 20"><path d="M10 0.500L18.500 5v10L10 19.500 1.500 15V5z" fill="#1f5fa8"/><path d="M10 3.500L16 7v7l-6 3.500L4 14V7z" fill="#e8e8e8"/><path d="M4 11l6 3 6-3v3l-6 3.500L4 14z" fill="#d9462b"/><rect x="7" y="7" width="3" height="3" fill="#7fb3e6"/><rect x="11" y="8" width="2.500" height="4" fill="#c0392b"/><path d="M4 7l6-3.500L16 7" stroke="#f39c12" stroke-width="0.800" fill="none"/></svg>
<span class="t" style="left:38px;top:660.5px;font-size:14px;color:#fff;font-weight:400;transform:translate(0,-50%);letter-spacing:-0.704px;-webkit-text-stroke:0.3px #fff;word-spacing:0.649px;">SweetHome 3D</span>
<svg class="i" style="left:193.0px;top:650.0px;" width="24" height="24" viewBox="0 0 24 24"><path fill="#fff" d="M16.59 8.59L12 13.17 7.41 8.59 6 10l6 6 6-6z"/></svg>
<div class="r" style="left:8px;top:686px;width:211px;height:36px;background:#333333;border-radius:4px;"></div>
<svg class="i" style="left:10px;top:688px;" width="20" height="20" viewBox="0 0 20 20"><rect x="0" y="0" width="20" height="20" fill="#c9dcc4"/><circle cx="8" cy="7.500" r="2.800" fill="none" stroke="#e4eee1" stroke-width="1.100"/><path d="M6 15h8.500a2.800 2.800 0 0 0 0-5.600 4 4 0 0 0-7.500 1A2.300 2.300 0 0 0 6 15z" fill="none" stroke="#e4eee1" stroke-width="1.100"/><path d="M8 16.500l-.6 1.500M11 16.500l-.6 1.500M14 16.500l-.6 1.500" stroke="#e4eee1" stroke-width="1"/></svg>
<span class="t" style="left:38px;top:696.5px;font-size:14px;color:#fff;font-weight:400;transform:translate(0,-50%);letter-spacing:-0.407px;-webkit-text-stroke:0.3px #fff;word-spacing:0.372px;">Heizungs- und Wetter-</span>
<span class="t" style="left:38px;top:712.5px;font-size:14px;color:#fff;font-weight:400;transform:translate(0,-50%);letter-spacing:-0.475px;-webkit-text-stroke:0.3px #fff;">Widgets</span>
<svg class="i" style="left:193.0px;top:692.0px;" width="24" height="24" viewBox="0 0 24 24"><path fill="#fff" d="M16.59 8.59L12 13.17 7.41 8.59 6 10l6 6 6-6z"/></svg>
<div class="r" style="left:8px;top:732px;width:211px;height:28px;background:#333333;border-radius:4px;"></div>
<span class="t" style="left:10px;top:745.9px;font-size:14px;color:#fff;font-weight:400;transform:translate(0,-50%);letter-spacing:-0.402px;-webkit-text-stroke:0.3px #fff;">Gestylt</span>
<svg class="i" style="left:193.0px;top:734.0px;" width="24" height="24" viewBox="0 0 24 24"><path fill="#fff" d="M16.59 8.59L12 13.17 7.41 8.59 6 10l6 6 6-6z"/></svg>
<div class="r" style="left:8px;top:770px;width:211px;height:28px;background:#333333;border-radius:4px;"></div>
<span class="t" style="left:10px;top:783.9px;font-size:14px;color:#fff;font-weight:400;transform:translate(0,-50%);letter-spacing:-0.65px;-webkit-text-stroke:0.3px #fff;">canvas-gauges</span>
<svg class="i" style="left:193.0px;top:772.0px;" width="24" height="24" viewBox="0 0 24 24"><path fill="#fff" d="M16.59 8.59L12 13.17 7.41 8.59 6 10l6 6 6-6z"/></svg>
<div class="r" style="left:8px;top:808px;width:211px;height:28px;background:#333333;border-radius:4px;"></div>
<span class="t" style="left:10px;top:821.9px;font-size:14px;color:#fff;font-weight:400;transform:translate(0,-50%);letter-spacing:-0.277px;-webkit-text-stroke:0.3px #fff;">energiefluss-erweitert</span>
<svg class="i" style="left:193.0px;top:810.0px;" width="24" height="24" viewBox="0 0 24 24"><path fill="#fff" d="M16.59 8.59L12 13.17 7.41 8.59 6 10l6 6 6-6z"/></svg>
<div class="r" style="left:8px;top:846px;width:211px;height:28px;background:#333333;border-radius:4px;"></div>
<span class="t" style="left:10px;top:859.9px;font-size:14px;color:#fff;font-weight:400;transform:translate(0,-50%);letter-spacing:-0.366px;-webkit-text-stroke:0.3px #fff;">hqwidgets</span>
<svg class="i" style="left:193.0px;top:848.0px;" width="24" height="24" viewBox="0 0 24 24"><path fill="#fff" d="M16.59 8.59L12 13.17 7.41 8.59 6 10l6 6 6-6z"/></svg>
<div class="r" style="left:8px;top:884px;width:211px;height:28px;background:#333333;border-radius:4px;"></div>
<span class="t" style="left:10px;top:897.9px;font-size:14px;color:#fff;font-weight:400;transform:translate(0,-50%);letter-spacing:0.047px;-webkit-text-stroke:0.3px #fff;">jqplot</span>
<svg class="i" style="left:193.0px;top:886.0px;" width="24" height="24" viewBox="0 0 24 24"><path fill="#fff" d="M16.59 8.59L12 13.17 7.41 8.59 6 10l6 6 6-6z"/></svg>
<div class="r" style="left:8px;top:922px;width:211px;height:28px;background:#333333;border-radius:4px;"></div>
<span class="t" style="left:10px;top:935.9px;font-size:14px;color:#fff;font-weight:400;transform:translate(0,-50%);letter-spacing:-0.258px;-webkit-text-stroke:0.3px #fff;">metro</span>
<svg class="i" style="left:193.0px;top:924.0px;" width="24" height="24" viewBox="0 0 24 24"><path fill="#fff" d="M16.59 8.59L12 13.17 7.41 8.59 6 10l6 6 6-6z"/></svg>
<div class="r" style="left:8px;top:960px;width:211px;height:28px;background:#333333;border-radius:4px;"></div>
<span class="t" style="left:10px;top:973.9px;font-size:14px;color:#fff;font-weight:400;transform:translate(0,-50%);letter-spacing:-0.526px;-webkit-text-stroke:0.3px #fff;">musiccast</span>
<svg class="i" style="left:193.0px;top:962.0px;" width="24" height="24" viewBox="0 0 24 24"><path fill="#fff" d="M16.59 8.59L12 13.17 7.41 8.59 6 10l6 6 6-6z"/></svg>
<div class="r" style="left:8px;top:998px;width:211px;height:28px;background:#333333;border-radius:4px;"></div>
<span class="t" style="left:10px;top:1011.9px;font-size:14px;color:#fff;font-weight:400;transform:translate(0,-50%);letter-spacing:-0.31px;-webkit-text-stroke:0.3px #fff;">mytime</span>
<svg class="i" style="left:193.0px;top:1000.0px;" width="24" height="24" viewBox="0 0 24 24"><path fill="#fff" d="M16.59 8.59L12 13.17 7.41 8.59 6 10l6 6 6-6z"/></svg>
<div class="r" style="left:8px;top:1036px;width:211px;height:28px;background:#333333;border-radius:4px;"></div>
<span class="t" style="left:10px;top:1049.9px;font-size:14px;color:#fff;font-weight:400;transform:translate(0,-50%);letter-spacing:-0.415px;-webkit-text-stroke:0.3px #fff;">schedule-switcher</span>
<svg class="i" style="left:193.0px;top:1038.0px;" width="24" height="24" viewBox="0 0 24 24"><path fill="#fff" d="M16.59 8.59L12 13.17 7.41 8.59 6 10l6 6 6-6z"/></svg>
<div class="r" style="left:252px;top:102px;width:1155px;height:46px;background:#121212;"></div>
<div class="r" style="left:1407px;top:102px;width:8px;height:978px;background:#000;"></div>
<svg class="i" style="left:258.0px;top:115.0px;" width="22" height="22" viewBox="0 0 24 24"><path fill="#1f9d1f" d="M8 5v14l11-7z"/></svg>
<svg class="i" style="left:290.6px;top:114.8px;" width="24" height="24" viewBox="0 0 24 24"><path fill="#fff" d="M11.99 18.54l-7.37-5.73L3 14.07l9 7 9-7-1.63-1.27-7.38 5.74zM12 16l7.36-5.73L21 9l-9-7-9 7 1.63 1.27L12 16z"/></svg>
<svg class="i" style="left:334.5px;top:114.7px;" width="18" height="18" viewBox="0 0 18 18"><g fill="none" stroke="#9a9a9a" stroke-width="1.1"><path d="M2.500 1.500v14.500h14"/><path d="M4.500 11l3-4.500 2.200 2.500L12 5.500l1.500 2 2.500-3.500"/></g></svg>
<span class="t" style="left:363px;top:122.7px;font-size:14px;color:#fff;font-weight:400;transform:translate(0,-50%);letter-spacing:0.095px;-webkit-text-stroke:0.35px #fff;">E-Charts</span>
<svg class="i" style="left:425.0px;top:112.8px;" width="20" height="20" viewBox="0 0 24 24"><path fill="#fff" d="M19 6.41L17.59 5 12 10.59 6.41 5 5 6.41 10.59 12 5 17.59 6.41 19 12 13.41 17.59 19 19 17.59 13.41 12z"/></svg>
<svg class="i" style="left:477px;top:114px;" width="18" height="18" viewBox="0 0 18 18"><g fill="none" stroke="#9a9a9a" stroke-width="1.100"><path d="M6.500 13.500V3.500l8-1.500v10"/><ellipse cx="4.800" cy="13.500" rx="1.800" ry="1.400"/><ellipse cx="12.800" cy="12" rx="1.800" ry="1.400"/><path d="M6.500 5.500l8-1.500"/></g></svg>
<span class="t" style="left:506px;top:122.7px;font-size:14px;color:#fff;font-weight:400;transform:translate(0,-50%);letter-spacing:0.631px;-webkit-text-stroke:0.35px #fff;">Multimedia</span>
<svg class="i" style="left:585.0px;top:112.8px;" width="20" height="20" viewBox="0 0 24 24"><path fill="#fff" d="M19 6.41L17.59 5 12 10.59 6.41 5 5 6.41 10.59 12 5 17.59 6.41 19 12 13.41 17.59 19 19 17.59 13.41 12z"/></svg>
<svg class="i" style="left:638px;top:115px;" width="16" height="16" viewBox="0 0 16 16"><g fill="#a8a8a8"><path d="M5.800 11.500V5.300a2.200 2.200 0 0 1 4.400 0v6.200z"/><rect x="5" y="11.200" width="6" height="1.600" rx="0.500"/><path d="M1.200 2.800l2.300-1.600 1.600 2.600-1.500 1zM14.800 2.800l-2.300-1.600-1.600 2.600 1.500 1zM1.200 13.400l2.300 1.600 1.600-2.600-1.500-1zM14.800 13.400l-2.300 1.600-1.600-2.600 1.500-1z" opacity="0.850"/></g><rect x="6.800" y="5.500" width="2.400" height="1.200" fill="#555"/><rect x="6.800" y="8" width="2.400" height="2.600" fill="#777"/></svg>
<span class="t" style="left:666px;top:122.7px;font-size:14px;color:#fff;font-weight:400;transform:translate(0,-50%);letter-spacing:0.4px;-webkit-text-stroke:0.35px #fff;">Alarmanlage</span>
<svg class="i" style="left:754.0px;top:112.8px;" width="20" height="20" viewBox="0 0 24 24"><path fill="#fff" d="M19 6.41L17.59 5 12 10.59 6.41 5 5 6.41 10.59 12 5 17.59 6.41 19 12 13.41 17.59 19 19 17.59 13.41 12z"/></svg>
<svg class="i" style="left:803px;top:111px;" width="24" height="24" viewBox="0 0 24 24"><path d="M1 12L12 2l11 10z" fill="#d8d8d8"/><path d="M12 2L1 12h3L12 4.800 20 12h3z" fill="#f4f4f4"/><rect x="4" y="11" width="16" height="9" fill="#f0f0f0"/><rect x="10.500" y="14" width="3" height="6" fill="#c9c9c9"/><rect x="5.500" y="13" width="3" height="3.500" fill="#9ab"/><rect x="15.500" y="13" width="3" height="3.500" fill="#9ab"/><rect x="2" y="20" width="20" height="2" fill="#5a7a3a"/><rect x="16" y="3.500" width="2" height="4" fill="#bbb"/></svg>
<span class="t" style="left:835px;top:122.7px;font-size:14px;color:#fff;font-weight:400;transform:translate(0,-50%);letter-spacing:0.363px;-webkit-text-stroke:0.35px #fff;">Home</span>
<svg class="i" style="left:880.0px;top:112.8px;" width="20" height="20" viewBox="0 0 24 24"><path fill="#fff" d="M19 6.41L17.59 5 12 10.59 6.41 5 5 6.41 10.59 12 5 17.59 6.41 19 12 13.41 17.59 19 19 17.59 13.41 12z"/></svg>
<svg class="i" style="left:932px;top:114.5px;" width="18" height="18" viewBox="0 0 18 18"><g fill="none" stroke="#d0d0d0" stroke-width="1.200"><path d="M2 9.500L9 2.500l7 7"/><path d="M4 8v7.500h10V8"/></g></svg>
<span class="t" style="left:960px;top:122.7px;font-size:14px;color:#fff;font-weight:400;transform:translate(0,-50%);letter-spacing:0.186px;-webkit-text-stroke:0.35px #fff;">SweetHome3D</span>
<svg class="i" style="left:1063.0px;top:112.8px;" width="20" height="20" viewBox="0 0 24 24"><path fill="#fff" d="M19 6.41L17.59 5 12 10.59 6.41 5 5 6.41 10.59 12 5 17.59 6.41 19 12 13.41 17.59 19 19 17.59 13.41 12z"/></svg>
<svg class="i" style="left:1114px;top:115px;" width="18" height="18" viewBox="0 0 18 18"><g fill="none" stroke="#9a9a9a" stroke-width="1"><path d="M2 5h9M4 8h6M2 11h5M3 14h9"/><circle cx="12.500" cy="10.500" r="2.500"/><path d="M12.500 6.500v1M12.500 13.500v1M8.500 10.500h1M15.500 10.500h1M9.700 7.700l.7.700M15.300 7.700l-.7.700"/></g></svg>
<span class="t" style="left:1144px;top:122.7px;font-size:14px;color:#fff;font-weight:400;transform:translate(0,-50%);letter-spacing:0.371px;-webkit-text-stroke:0.35px #fff;">Wetter</span>
<svg class="i" style="left:1192.0px;top:112.8px;" width="20" height="20" viewBox="0 0 24 24"><path fill="#fff" d="M19 6.41L17.59 5 12 10.59 6.41 5 5 6.41 10.59 12 5 17.59 6.41 19 12 13.41 17.59 19 19 17.59 13.41 12z"/></svg>
<svg class="i" style="left:1242.5px;top:114.7px;" width="18" height="18" viewBox="0 0 18 18"><g fill="none" stroke="#9a9a9a" stroke-width="1.1"><path d="M2.500 1.500v14.500h14"/><path d="M4.500 11l3-4.500 2.200 2.500L12 5.500l1.500 2 2.500-3.500"/></g></svg>
<span class="t" style="left:1273px;top:122.7px;font-size:14px;color:#fff;font-weight:400;transform:translate(0,-50%);letter-spacing:0.095px;-webkit-text-stroke:0.35px #fff;">E-Charts</span>
<svg class="i" style="left:1378.0px;top:115.0px;" width="24" height="24" viewBox="0 0 24 24"><path fill="#fff" d="M5 13h14v-2H5v2zm-2 4h14v-2H3v2zM7 7v2h14V7H7z"/></svg>
<div class="r" style="left:252px;top:148px;width:1099px;height:909px;background:#021c2b;"></div>
<div class="r" style="left:1351px;top:148px;width:56px;height:909px;background:#121212;"></div>
<div class="r" style="left:252px;top:148px;width:1115px;height:48px;background:#0f4a63;"></div>
<svg class="i" style="left:272px;top:160px;" width="24" height="24" viewBox="0 0 24 24"><path d="M2 10L12 2l10 8z" fill="#5d6f78"/><path d="M4.500 10v11h15V10" fill="none" stroke="#5d6f78" stroke-width="1.300"/><rect x="8.500" y="13" width="7" height="5.500" rx="1" fill="none" stroke="#5d6f78" stroke-width="1.200"/><rect x="11.300" y="14.500" width="1.400" height="2.500" fill="#5d6f78"/></svg>
<span class="t" style="left:364.5px;top:175px;font-size:19.5px;color:#687379;font-weight:400;transform:translate(0,-50%);letter-spacing:-0.491px;">Test</span>
<div class="r" style="left:252px;top:196px;width:421px;height:1px;background:transparent;background:repeating-linear-gradient(90deg,#c4beb8 0 2.200px,transparent 2.200px 6px);background-position:-0.5px 0;"></div>
<div class="r" style="left:252px;top:996px;width:421px;height:1px;background:transparent;background:repeating-linear-gradient(90deg,#c4beb8 0 2.200px,transparent 2.200px 6px);background-position:-0.5px 0;"></div>
<div class="r" style="left:252px;top:196px;width:1px;height:801px;background:transparent;background:repeating-linear-gradient(180deg,#c4beb8 0 1.800px,transparent 1.800px 6px);background-position:0 0px;"></div>
<div class="r" style="left:672px;top:196px;width:1px;height:801px;background:transparent;background:repeating-linear-gradient(180deg,#c4beb8 0 1.800px,transparent 1.800px 6px);background-position:0 0px;"></div>
<div class="r" style="left:681px;top:196px;width:422px;height:1px;background:transparent;background:repeating-linear-gradient(90deg,#c4beb8 0 2.200px,transparent 2.200px 6px);background-position:-0.5px 0;"></div>
<div class="r" style="left:681px;top:996px;width:422px;height:1px;background:transparent;background:repeating-linear-gradient(90deg,#c4beb8 0 2.200px,transparent 2.200px 6px);background-position:-0.5px 0;"></div>
<div class="r" style="left:681px;top:196px;width:1px;height:801px;background:transparent;background:repeating-linear-gradient(180deg,#c4beb8 0 1.800px,transparent 1.800px 6px);background-position:0 0px;"></div>
<div class="r" style="left:1102px;top:196px;width:1px;height:801px;background:transparent;background:repeating-linear-gradient(180deg,#c4beb8 0 1.800px,transparent 1.800px 6px);background-position:0 0px;"></div>
<div class="r" style="left:1111px;top:196px;width:296px;height:1px;background:transparent;background:repeating-linear-gradient(90deg,#c4beb8 0 2.200px,transparent 2.200px 6px);background-position:-0.5px 0;"></div>
<div class="r" style="left:1111px;top:996px;width:296px;height:1px;background:transparent;background:repeating-linear-gradient(90deg,#c4beb8 0 2.200px,transparent 2.200px 6px);background-position:-0.5px 0;"></div>
<div class="r" style="left:1111px;top:196px;width:1px;height:801px;background:transparent;background:repeating-linear-gradient(180deg,#c4beb8 0 1.800px,transparent 1.800px 6px);background-position:0 0px;"></div>
<div class="r" style="left:257px;top:201px;width:411px;height:101.5px;background:#0f2a38;border-radius:4px;box-shadow:0 1px 2px rgba(0,0,0,.35);"></div>
<div class="r" style="left:253px;top:201px;width:94px;height:14px;background:#8f9fa8;border-radius:0 0 3px 0;"></div>
<span class="t" style="left:256px;top:208.4px;font-size:9.5px;color:#15242d;font-weight:400;transform:translate(0,-50%);letter-spacing:0.205px;-webkit-text-stroke:0.2px #15242d;">w000696</span>
<svg class="i" style="left:253px;top:201px;" width="94" height="14" viewBox="0 0 94 14"><g fill="none" stroke-linecap="butt"><path d="M58 4v2.600H48.800M51.800 3.600l-3 3 3 3" stroke="#4f5f68" stroke-width="1.100"/><rect x="65" y="2.300" width="1.200" height="8.700" fill="#1b7a2f"/><rect x="75" y="2.300" width="1.200" height="8.700" fill="#1b7a2f"/><path d="M67.300 6.600h6.600M69.300 4.900l-1.900 1.700 1.900 1.700M71.900 4.900l1.900 1.700-1.900 1.700" stroke="#1b7a2f" stroke-width="1"/><circle cx="85.500" cy="3.100" r="1.150" stroke="#1b7a2f" stroke-width="0.900"/><path d="M85.500 4.300v7.400M83.300 5.700h4.400M81 7.600c0 2.800 2.500 4.100 4.500 4.100s4.500-1.300 4.500-4.100M80.600 9l.4-1.500 1.400.600M90.400 9L90 7.500l-1.400.600" stroke="#1b7a2f" stroke-width="1"/></g></svg>
<div class="r" style="left:642px;top:201px;width:30px;height:13px;background:#8f9fa8;border-radius:3px 0 0 3px;"></div>
<span class="t" style="left:652.5px;top:208.2px;font-size:10.7px;color:#15242d;font-weight:400;transform:translate(0,-50%);">1</span>
<svg class="i" style="left:660px;top:203px;" width="9" height="9.5" viewBox="0 0 9 9.500"><path d="M4.500 0.300v8.400M0.800 5l3.700 3.700 3.700-3.700" fill="none" stroke="#15242d" stroke-width="1.100"/></svg>
<span class="t" style="left:348.3px;top:234.5px;font-size:16px;color:#fff;font-weight:400;transform:translate(0,-50%);letter-spacing:-0.35px;">11.2025</span>
<svg class="i" style="left:412.0px;top:223.0px;" width="22" height="22" viewBox="0 0 24 24"><path fill="#fff" d="M15.41 7.41L14 6l-6 6 6 6 1.41-1.41L10.83 12z"/></svg>
<svg class="i" style="left:452.0px;top:223.0px;" width="22" height="22" viewBox="0 0 24 24"><path fill="#52646e" d="M10 6L8.59 7.41 13.17 12l-4.58 4.59L10 18l6-6z"/></svg>
<div class="r" style="left:483px;top:216px;width:75px;height:36px;background:#2d434d;border-radius:4px;"></div>
<span class="t" style="left:519.8104999999999px;top:232.7px;font-size:14px;color:#687c86;font-weight:400;transform:translate(-50%,-50%);letter-spacing:0.021px;">JETZT</span>
<div class="r" style="left:317px;top:254px;width:291px;height:36px;background:#e0e0e0;border-radius:4px;"></div>
<div class="r" style="left:458px;top:254px;width:81px;height:36px;background:#4dabf5;"></div>
<span class="t" style="left:346.5765px;top:271.7px;font-size:14px;color:#111;font-weight:400;transform:translate(-50%,-50%);letter-spacing:-0.247px;">TAG</span>
<span class="t" style="left:416.88349999999997px;top:271.7px;font-size:14px;color:#111;font-weight:400;transform:translate(-50%,-50%);letter-spacing:-0.633px;">WOCHE</span>
<span class="t" style="left:498.9985px;top:271.7px;font-size:14px;color:#111;font-weight:400;transform:translate(-50%,-50%);letter-spacing:-0.003px;">MONAT</span>
<span class="t" style="left:573.7925px;top:271.7px;font-size:14px;color:#111;font-weight:400;transform:translate(-50%,-50%);letter-spacing:0.185px;">JAHR</span>
<div class="r" style="left:255px;top:324px;width:412px;height:192px;background:#0f2a38;border-radius:4px;box-shadow:0 1px 2px rgba(0,0,0,.35);"></div>
<div class="r" style="left:252px;top:306px;width:59px;height:14px;background:#fff;border-radius:0 0 3px 0;"></div>
<span class="t" style="left:255px;top:313.4px;font-size:9.5px;color:#111;font-weight:400;transform:translate(0,-50%);letter-spacing:0.205px;-webkit-text-stroke:0.2px #111;">w000695</span>
<svg class="i" style="left:298.5px;top:307.5px;" width="10" height="11" viewBox="0 0 10 11"><g fill="none" stroke="#333" stroke-width="0.950"><circle cx="5" cy="1.600" r="1.150"/><path d="M5 2.800v7.400M2.800 4.200h4.400M0.500 6.100c0 2.800 2.500 4.100 4.500 4.100s4.500-1.300 4.500-4.100M0.100 7.500l.4-1.500 1.400.600M9.900 7.500L9.500 6l-1.400.600"/></g></svg>
<div class="r" style="left:393px;top:345px;width:25px;height:14px;background:#0faaf7;border-radius:3px;"></div>
<span class="t" style="left:423.3px;top:352.5px;font-size:13px;color:#dbe3e8;font-weight:400;transform:translate(0,-50%);letter-spacing:-0.052px;">Aussentemperatur</span>
<svg class="i" style="left:604px;top:346px;" width="16" height="16" viewBox="0 0 16 16"><g fill="none" stroke="#63737d" stroke-width="0.900"><path d="M8 2L1.500 5 8 8l6.500-3z" fill="#63737d"/><path d="M1.500 7L8 10l6.500-3M1.500 9L8 12l6.500-3M1.500 11L8 14l6.500-3"/></g></svg>
<svg class="i" style="left:630px;top:346px;" width="16" height="16" viewBox="0 0 16 16"><g fill="none" stroke="#63737d" stroke-width="1"><path d="M3 1.500h7l3 3v10H3z"/><path d="M5 6h6M5 8.500h6M5 11h6"/></g></svg>
<svg class="i" style="left:0;top:0" width="1920" height="1080" viewBox="0 0 1920 1080"><rect x="303" y="452" width="338.500" height="1.200" fill="#e2e6ea"/><rect x="303" y="434" width="338.500" height="1.200" fill="#e2e6ea"/><rect x="303" y="416" width="338.500" height="1.200" fill="#e2e6ea"/><rect x="303" y="398" width="338.500" height="1.200" fill="#e2e6ea"/><rect x="303" y="380" width="338.500" height="1.200" fill="#e2e6ea"/><rect x="304" y="380" width="8" height="90" fill="#0faaf7"/><rect x="315" y="380" width="7" height="90" fill="#0faaf7"/><rect x="326" y="386" width="7" height="84" fill="#0faaf7"/><rect x="337" y="404" width="7" height="66" fill="#0faaf7"/><rect x="348" y="398" width="7" height="72" fill="#0faaf7"/><rect x="359" y="398" width="7" height="72" fill="#0faaf7"/><rect x="370" y="386" width="7" height="84" fill="#0faaf7"/><rect x="380" y="398" width="8" height="72" fill="#0faaf7"/><rect x="391" y="434" width="8" height="36" fill="#0faaf7"/><rect x="402" y="422" width="8" height="48" fill="#0faaf7"/><rect x="413" y="410" width="8" height="60" fill="#0faaf7"/><rect x="424" y="410" width="8" height="60" fill="#0faaf7"/><rect x="435" y="410" width="8" height="60" fill="#0faaf7"/><rect x="302.500" y="470" width="339" height="1" fill="#6e7780"/><rect x="302.30" y="470" width="1" height="5" fill="#6e7780"/><rect x="345.85" y="470" width="1" height="5" fill="#6e7780"/><rect x="389.40" y="470" width="1" height="5" fill="#6e7780"/><rect x="432.95" y="470" width="1" height="5" fill="#6e7780"/><rect x="476.50" y="470" width="1" height="5" fill="#6e7780"/><rect x="520.05" y="470" width="1" height="5" fill="#6e7780"/><rect x="563.60" y="470" width="1" height="5" fill="#6e7780"/><rect x="607.15" y="470" width="1" height="5" fill="#6e7780"/><rect x="640.700" y="470" width="1" height="5" fill="#6e7780"/></svg>
<span class="t" style="left:293.7px;top:470.7px;font-size:11.5px;color:#6e7780;font-weight:400;transform:translate(-100%,-50%);">0</span>
<span class="t" style="left:293.7px;top:452.7px;font-size:11.5px;color:#6e7780;font-weight:400;transform:translate(-100%,-50%);">3</span>
<span class="t" style="left:293.7px;top:434.7px;font-size:11.5px;color:#6e7780;font-weight:400;transform:translate(-100%,-50%);">6</span>
<span class="t" style="left:293.7px;top:416.7px;font-size:11.5px;color:#6e7780;font-weight:400;transform:translate(-100%,-50%);">9</span>
<span class="t" style="left:293.7px;top:398.7px;font-size:11.5px;color:#6e7780;font-weight:400;transform:translate(-100%,-50%);">12</span>
<span class="t" style="left:293.7px;top:380.7px;font-size:11.5px;color:#6e7780;font-weight:400;transform:translate(-100%,-50%);">15</span>
<span class="t" style="left:307.4475px;top:484.5px;font-size:11.5px;color:#6e7780;font-weight:400;transform:translate(-50%,-50%);letter-spacing:0.295px;">01.11</span>
<span class="t" style="left:351.1175px;top:484.5px;font-size:11.5px;color:#6e7780;font-weight:400;transform:translate(-50%,-50%);letter-spacing:0.295px;">04.11</span>
<span class="t" style="left:394.78749999999997px;top:484.5px;font-size:11.5px;color:#6e7780;font-weight:400;transform:translate(-50%,-50%);letter-spacing:0.295px;">08.11</span>
<span class="t" style="left:438.4575px;top:484.5px;font-size:11.5px;color:#6e7780;font-weight:400;transform:translate(-50%,-50%);letter-spacing:0.295px;">12.11</span>
<span class="t" style="left:482.1275px;top:484.5px;font-size:11.5px;color:#6e7780;font-weight:400;transform:translate(-50%,-50%);letter-spacing:0.295px;">16.11</span>
<span class="t" style="left:525.7975000000001px;top:484.5px;font-size:11.5px;color:#6e7780;font-weight:400;transform:translate(-50%,-50%);letter-spacing:0.295px;">20.11</span>
<span class="t" style="left:569.4675px;top:484.5px;font-size:11.5px;color:#6e7780;font-weight:400;transform:translate(-50%,-50%);letter-spacing:0.295px;">24.11</span>
<span class="t" style="left:613.1375px;top:484.5px;font-size:11.5px;color:#6e7780;font-weight:400;transform:translate(-50%,-50%);letter-spacing:0.295px;">28.11</span>
<div class="r" style="left:686px;top:201px;width:412px;height:216px;background:#0f2838;border-radius:4px;box-shadow:0 1px 2px rgba(0,0,0,.35);"></div>
<div class="r" style="left:682px;top:201px;width:94px;height:14px;background:#8f9fa8;border-radius:0 0 3px 0;"></div>
<span class="t" style="left:685px;top:208.4px;font-size:9.5px;color:#15242d;font-weight:400;transform:translate(0,-50%);letter-spacing:0.205px;-webkit-text-stroke:0.2px #15242d;">w000698</span>
<svg class="i" style="left:682px;top:201px;" width="94" height="14" viewBox="0 0 94 14"><g fill="none" stroke-linecap="butt"><path d="M58 4v2.600H48.800M51.800 3.600l-3 3 3 3" stroke="#4f5f68" stroke-width="1.100"/><rect x="65" y="2.300" width="1.200" height="8.700" fill="#1b7a2f"/><rect x="75" y="2.300" width="1.200" height="8.700" fill="#1b7a2f"/><path d="M67.300 6.600h6.600M69.300 4.900l-1.900 1.700 1.900 1.700M71.900 4.900l1.900 1.700-1.900 1.700" stroke="#1b7a2f" stroke-width="1"/><circle cx="85.500" cy="3.100" r="1.150" stroke="#1b7a2f" stroke-width="0.900"/><path d="M85.500 4.300v7.400M83.300 5.700h4.400M81 7.600c0 2.800 2.500 4.100 4.500 4.100s4.500-1.300 4.500-4.100M80.600 9l.4-1.500 1.400.600M90.400 9L90 7.500l-1.400.600" stroke="#1b7a2f" stroke-width="1"/></g></svg>
<div class="r" style="left:1072px;top:201px;width:30px;height:13px;background:#8f9fa8;border-radius:3px 0 0 3px;"></div>
<span class="t" style="left:1082px;top:208.2px;font-size:10.7px;color:#15242d;font-weight:400;transform:translate(0,-50%);">2</span>
<svg class="i" style="left:1090px;top:203px;" width="9" height="9.5" viewBox="0 0 9 9.500"><path d="M4.500 9.200V0.800M0.800 4.500l3.700-3.700 3.700 3.700" fill="none" stroke="#15242d" stroke-width="1.100"/></svg>
<span class="t" style="left:702.8px;top:235px;font-size:24px;color:#fff;font-weight:400;transform:translate(0,-50%);letter-spacing:-0.328px;">Badfenster</span>
<svg class="i" style="left:804px;top:269px;" width="176" height="117" viewBox="0 0 176 117"><defs><linearGradient id="gl" x1="0" y1="1" x2="1" y2="0"><stop offset="0" stop-color="#d8dfea"/><stop offset="0.300" stop-color="#b4bcc7"/><stop offset="0.500" stop-color="#929aa7"/><stop offset="0.650" stop-color="#b0b7c1"/><stop offset="1" stop-color="#c9ced4"/></linearGradient>
<pattern id="sl" width="10" height="10" patternUnits="userSpaceOnUse" y="3.900"><rect width="10" height="0.700" y="0" fill="#78828e" opacity="0.600"/></pattern></defs>
<rect x="0" y="0" width="176" height="117" fill="#b9bbbd"/><rect x="0.700" y="0.700" width="174.600" height="115.600" fill="#dcdddf"/><rect x="2" y="2" width="172" height="113" fill="#a4a8ad"/>
<rect x="3" y="3" width="82.500" height="111" fill="url(#gl)"/><rect x="3" y="3" width="82.500" height="111" fill="url(#sl)"/>
<rect x="91" y="3" width="82" height="111" fill="url(#gl)"/><rect x="91" y="3" width="82" height="111" fill="url(#sl)"/>
<rect x="85.800" y="1" width="5" height="115" fill="#d9dadc"/><rect x="88" y="1" width="0.800" height="115" fill="#9a9ea3"/>
<rect x="81.800" y="60" width="2.200" height="11" rx="0.500" fill="#ececec" stroke="#9a9a9a" stroke-width="0.400"/><rect x="92" y="60" width="2.200" height="11" rx="0.500" fill="#ececec" stroke="#9a9a9a" stroke-width="0.400"/></svg>
<span class="t" style="left:1212.582px;top:214.2px;font-size:17.5px;color:#fff;font-weight:400;transform:translate(-50%,-50%);letter-spacing:-0.236px;word-spacing:0.224px;">Aussensesor Garten</span>
<svg class="i" style="left:1126px;top:241px;" width="176" height="64" viewBox="0 0 176 64"><defs><linearGradient id="bg1" x1="0" y1="0" x2="1" y2="1"><stop offset="0" stop-color="#9a9a9a"/><stop offset="0.300" stop-color="#6a6a6a"/><stop offset="0.600" stop-color="#4a4a4a"/><stop offset="1" stop-color="#2e2e2e"/></linearGradient></defs>
<rect x="1.500" y="1.500" width="153" height="61" rx="10" fill="url(#bg1)" stroke="#e6e6e6" stroke-width="3"/>
<path d="M5 12a8 8 0 0 1 4-6v52a8 8 0 0 1-4-6z" fill="#d94a3a"/>
<rect x="157" y="17.500" width="16" height="29" rx="4" fill="#c8c8c8" stroke="#aaa" stroke-width="0.800"/></svg>
<span class="t" style="left:1174.400px;top:252.500px;font-size:41px;font-weight:700;color:#fff;-webkit-text-stroke:6px #000;paint-order:stroke fill;letter-spacing:1px;">3%</span>
<svg class="i" style="left:0;top:0" width="1920" height="400" viewBox="0 0 1920 400"><path d="M1258.900 247.900L1273.300 247.600 1263.700 266.100 1278.500 266.400 1254.400 299.800 1260 276.100 1250 275z" fill="#f5ab2e" stroke="#120c02" stroke-width="1.500" stroke-linejoin="miter"/><path d="M1210.3 240.5Q1207.4 240.1 1201.1 245.3Q1194.8 250.5 1194.2 257.9Q1193.7 265.3 1194.7 272.4Q1195.6 279.4 1200.0 282.4Q1204.4 285.3 1213.7 286.6Q1223.0 287.9 1230.4 287.5Q1237.8 287.2 1240.9 283.6Q1244.0 280.1 1243.5 274.6Q1243.0 269.0 1238.5 262.7Q1234.0 256.4 1228.5 251.6Q1223.0 246.8 1218.2 243.9Q1213.3 240.9 1210.3 240.5Z" fill="none" stroke="#e8132e" stroke-width="4.300" stroke-linejoin="round"/><path d="M1178.300 355.500C1186 353.800 1192 353 1200 352.500c9-.6 16-1 25-1.200 9-.3 16-.4 23.300-.5" fill="none" stroke="#e8132e" stroke-width="4" stroke-linecap="round"/></svg>
<span class="t" style="left:1212.7px;top:341px;font-size:18px;color:#fff;font-weight:400;transform:translate(-50%,-50%);">2.6 Volt</span>
<div class="r" style="left:1110px;top:198px;width:206px;height:1px;background:transparent;background:repeating-linear-gradient(90deg,#0c50b4 0 2.400px,transparent 2.400px 6px);background-position:1px 0;"></div>
<div class="r" style="left:1110px;top:351.5px;width:206px;height:1px;background:transparent;background:repeating-linear-gradient(90deg,#0c50b4 0 2.400px,transparent 2.400px 6px);background-position:1px 0;"></div>
<div class="r" style="left:1110px;top:198px;width:1px;height:154px;background:transparent;background:repeating-linear-gradient(180deg,#0c50b4 0 2.400px,transparent 2.400px 6px);background-position:0 1px;"></div>
<div class="r" style="left:1315px;top:198px;width:1px;height:154px;background:transparent;background:repeating-linear-gradient(180deg,#0c50b4 0 2.400px,transparent 2.400px 6px);background-position:0 1px;"></div>
<div class="r" style="left:1112.5px;top:200px;width:59.5px;height:13.5px;background:rgba(10,110,215,0.570);border-radius:0 0 2px 2px;"></div>
<span class="t" style="left:1115px;top:207.8px;font-size:9.5px;color:#8d9fae;font-weight:400;transform:translate(0,-50%);letter-spacing:0.205px;">w000846</span>
<svg class="i" style="left:1159.0px;top:201.5px;" width="10" height="11" viewBox="0 0 10 11"><g fill="none" stroke="#8fa3b3" stroke-width="0.950"><circle cx="5" cy="1.600" r="1.150"/><path d="M5 2.800v7.400M2.800 4.200h4.400M0.500 6.100c0 2.800 2.500 4.100 4.500 4.100s4.500-1.300 4.500-4.100M0.100 7.500l.4-1.500 1.400.600M9.900 7.500L9.500 6l-1.400.600"/></g></svg>
<div class="r" style="left:1110px;top:199px;width:7px;height:6px;background:#0d4fa3;"></div>
<div class="r" style="left:1309px;top:199px;width:7px;height:6px;background:#0d4fa3;"></div>
<div class="r" style="left:1110px;top:346px;width:7px;height:6px;background:#0d4fa3;"></div>
<div class="r" style="left:1309px;top:346px;width:7px;height:6px;background:#0d4fa3;"></div>
<div class="r" style="left:252px;top:1057px;width:1155px;height:17px;background:#121212;"></div>
<div class="r" style="left:252px;top:1074px;width:1155px;height:6px;background:#121212;"></div>
<div class="r" style="left:326px;top:1057px;width:936px;height:17px;background:#757575;"></div>
<svg class="i" style="left:251.0px;top:1056.5px;" width="18" height="18" viewBox="0 0 24 24"><path fill="#6a6a6a" d="M15.41 7.41L14 6l-6 6 6 6 1.41-1.41L10.83 12z"/></svg>
<svg class="i" style="left:1390.0px;top:1056.5px;" width="18" height="18" viewBox="0 0 24 24"><path fill="#6a6a6a" d="M10 6L8.59 7.41 13.17 12l-4.58 4.59L10 18l6-6z"/></svg>
<div class="r" style="left:1409px;top:578px;width:3px;height:36px;background:#3c3c50;border-radius:2px;"></div>
<div class="r" style="left:1415px;top:102px;width:505px;height:978px;background:#121212;"></div>
<div class="r" style="left:1423px;top:110px;width:488px;height:34px;background:#333333;border-radius:4px;"></div>
<svg class="i" style="left:1431.0px;top:114.3px;" width="24" height="24" viewBox="0 0 24 24"><path fill="#fff" d="M19 5v14H5V5h14m1.1-2H3.9c-.5 0-.9.4-.9.9v16.2c0 .4.4.9.9.9h16.2c.4 0 .9-.5.9-.9V3.9c0-.5-.5-.9-.9-.9zM11 7h6v2h-6V7zm0 4h6v2h-6v-2zm0 4h6v2h-6zM7 7h2v2H7zm0 4h2v2H7zm0 4h2v2H7z"/></svg>
<span class="t" style="left:1459.2px;top:127px;font-size:17px;color:#fff;font-weight:400;transform:translate(0,-50%);letter-spacing:-0.124px;">Attribute</span>
<svg class="i" style="left:1808.0px;top:117.0px;" width="24" height="24" viewBox="0 0 24 24"><path fill="#5e5e5e" d="M12 5.83L15.17 9l1.41-1.41L12 3 7.41 7.59 8.83 9 12 5.83zm0 12.34L8.83 15l-1.41 1.41L12 21l4.59-4.59L15.17 15 12 18.17z"/></svg>
<svg class="i" style="left:1845.0px;top:117.0px;" width="24" height="24" viewBox="0 0 24 24"><path fill="#fff" d="M7.41 18.59L8.83 20 12 16.83 15.17 20l1.41-1.41L12 14l-4.59 4.59zm9.18-13.18L15.17 4 12 7.17 8.83 4 7.41 5.41 12 10l4.59-4.59z"/></svg>
<svg class="i" style="left:1881.8px;top:115.0px;" width="24" height="24" viewBox="0 0 24 24"><path fill="#fff" d="M19 6.41L17.59 5 12 10.59 6.41 5 5 6.41 10.59 12 5 17.59 6.41 19 12 13.41 17.59 19 19 17.59 13.41 12z"/></svg>
<span class="t" style="left:1457.7545px;top:169.7px;font-size:14px;color:#fff;font-weight:400;transform:translate(-50%,-50%);letter-spacing:-0.491px;-webkit-text-stroke:0.3px #fff;">SEITE</span>
<span class="t" style="left:1535.734px;top:169.7px;font-size:14px;color:#4dabf5;font-weight:400;transform:translate(-50%,-50%);letter-spacing:-0.532px;-webkit-text-stroke:0.3px #4dabf5;">WIDGET</span>
<span class="t" style="left:1608.202px;top:169.7px;font-size:14px;color:#fff;font-weight:400;transform:translate(-50%,-50%);letter-spacing:-0.596px;-webkit-text-stroke:0.3px #fff;">CSS</span>
<span class="t" style="left:1682.228px;top:169.7px;font-size:14px;color:#fff;font-weight:400;transform:translate(-50%,-50%);letter-spacing:-0.344px;-webkit-text-stroke:0.3px #fff;">SKRIPTE</span>
<div class="r" style="left:1493px;top:189px;width:86px;height:2px;background:#4dabf5;"></div>
<svg class="i" style="left:1424.4px;top:192.2px;" width="37.5" height="37.2" viewBox="0 0 39 38"><rect x="1" y="1" width="37" height="36" rx="8" fill="#0c2a45" stroke="#3a9be0" stroke-width="1.400"/><rect x="8" y="11" width="23" height="7" rx="3" fill="#3a9be0"/><text x="19.500" y="16.500" font-size="4.500" font-weight="700" fill="#cfe8ff" text-anchor="middle" font-family="Liberation Sans, sans-serif">val</text><text x="19.500" y="29.500" font-size="9.500" font-weight="700" fill="#3a9be0" text-anchor="middle" font-family="Liberation Sans, sans-serif">&lt;div&gt;</text></svg>
<span class="t" style="left:1467.5px;top:202.5px;font-size:16px;color:#fff;font-weight:400;transform:translate(0,-50%);letter-spacing:-0.35px;">w000846</span>
<span class="t" style="left:1538.3px;top:202px;font-size:12px;color:#fff;font-weight:700;transform:translate(0,-50%);letter-spacing:-0.564px;font-style:italic;">Basic</span>
<span class="t" style="left:1538.3px;top:221.7px;font-size:12px;color:#fff;font-weight:400;transform:translate(0,-50%);letter-spacing:-0.322px;font-style:italic;word-spacing:0.305px;">String (unescaped)</span>
<svg class="i" style="left:1893.5px;top:230.5px;" width="18" height="18" viewBox="0 0 24 24"><path fill="#6a6a6a" d="M7.41 15.41L12 10.83l4.59 4.58L18 14l-6-6-6 6z"/></svg>
<div class="r" style="left:1894px;top:248px;width:17px;height:530px;background:#757575;"></div>
<svg class="i" style="left:1893.5px;top:1068.0px;" width="18" height="18" viewBox="0 0 24 24"><path fill="#6a6a6a" d="M16.59 8.59L12 13.17 7.41 8.59 6 10l6 6 6-6z"/></svg>
<div class="r" style="left:1423px;top:241px;width:470.4px;height:28px;background:#333333;border-radius:4px;"></div>
<svg class="i" style="left:1424.7px;top:244.7px;" width="20" height="20" viewBox="0 0 24 24"><path fill="#fff" d="M4.25 5.61C6.27 8.2 10 13 10 13v6c0 .55.45 1 1 1h2c.55 0 1-.45 1-1v-6s3.72-4.8 5.74-7.39c.51-.66.04-1.61-.79-1.61H5.04c-.83 0-1.3.95-.79 1.61z"/></svg>
<span class="t" style="left:1445px;top:254.7px;font-size:13px;color:#fff;font-weight:400;transform:translate(0,-50%);-webkit-text-stroke:0.2px #fff;">Generell</span>
<svg class="i" style="left:1852.0px;top:246.0px;" width="16" height="16" viewBox="0 0 24 24"><path fill="#fff" d="M19 5v14H5V5h14m0-2H5c-1.1 0-2 .9-2 2v14c0 1.1.9 2 2 2h14c1.1 0 2-.9 2-2V5c0-1.1-.9-2-2-2z"/></svg>
<div class="r" style="left:1423px;top:279px;width:470.4px;height:28px;background:#333333;border-radius:4px;"></div>
<span class="t" style="left:1425px;top:293.3px;font-size:13px;color:#fff;font-weight:400;transform:translate(0,-50%);letter-spacing:0.082px;">Sichtbarkeit</span>
<svg class="i" style="left:1852.0px;top:284.0px;" width="16" height="16" viewBox="0 0 24 24"><path fill="#fff" d="M19 5v14H5V5h14m0-2H5c-1.1 0-2 .9-2 2v14c0 1.1.9 2 2 2h14c1.1 0 2-.9 2-2V5c0-1.1-.9-2-2-2z"/></svg>
<div class="r" style="left:1423px;top:317px;width:470.4px;height:181px;background:#333333;border-radius:4px;"></div>
<span class="t" style="left:1425px;top:331.3px;font-size:14px;color:#fff;font-weight:700;transform:translate(0,-50%);letter-spacing:-0.1px;">Allgemein</span>
<svg class="i" style="left:1852.0px;top:322.6px;" width="16" height="16" viewBox="0 0 24 24"><path fill="#4dabf5" d="M19 3H5c-1.11 0-2 .9-2 2v14c0 1.1.89 2 2 2h14c1.11 0 2-.9 2-2V5c0-1.1-.89-2-2-2zm-9 14l-5-5 1.41-1.41L10 14.17l7.59-7.59L19 8l-9 9z"/></svg>
<svg class="i" style="left:1869.0px;top:319.7px;" width="22" height="22" viewBox="0 0 24 24"><path fill="#fff" d="M7.41 15.41L12 10.83l4.59 4.58L18 14l-6-6-6 6z"/></svg>
<div class="r" style="left:1423px;top:508px;width:470.4px;height:404px;background:#333333;border-radius:4px;"></div>
<span class="t" style="left:1425px;top:522.3px;font-size:14px;color:#fff;font-weight:700;transform:translate(0,-50%);letter-spacing:-0.27px;word-spacing:0.251px;">CSS Allgemein</span>
<svg class="i" style="left:1852.0px;top:513.6px;" width="16" height="16" viewBox="0 0 24 24"><path fill="#4dabf5" d="M19 3H5c-1.11 0-2 .9-2 2v14c0 1.1.89 2 2 2h14c1.11 0 2-.9 2-2V5c0-1.1-.89-2-2-2zm-9 14l-5-5 1.41-1.41L10 14.17l7.59-7.59L19 8l-9 9z"/></svg>
<svg class="i" style="left:1869.0px;top:510.70000000000005px;" width="22" height="22" viewBox="0 0 24 24"><path fill="#fff" d="M7.41 15.41L12 10.83l4.59 4.58L18 14l-6-6-6 6z"/></svg>
<div class="r" style="left:1423px;top:923px;width:470.4px;height:170px;background:#333333;border-radius:4px;"></div>
<span class="t" style="left:1425px;top:937.3px;font-size:14px;color:#fff;font-weight:700;transform:translate(0,-50%);letter-spacing:-0.091px;word-spacing:0.076px;">CSS Font &amp; Text</span>
<svg class="i" style="left:1852.0px;top:928.6px;" width="16" height="16" viewBox="0 0 24 24"><path fill="#4dabf5" d="M19 3H5c-1.11 0-2 .9-2 2v14c0 1.1.89 2 2 2h14c1.11 0 2-.9 2-2V5c0-1.1-.89-2-2-2zm-9 14l-5-5 1.41-1.41L10 14.17l7.59-7.59L19 8l-9 9z"/></svg>
<svg class="i" style="left:1869.0px;top:925.7px;" width="22" height="22" viewBox="0 0 24 24"><path fill="#fff" d="M7.41 15.41L12 10.83l4.59 4.58L18 14l-6-6-6 6z"/></svg>
<span class="t" style="left:1426px;top:372.4px;font-size:13px;color:#fff;font-weight:400;transform:translate(0,-50%);">Objekt ID</span>
<svg class="i" style="left:1599.8px;top:361.0px;" width="16" height="16" viewBox="0 0 24 24"><path fill="#fff" d="M3.9 12c0-1.71 1.39-3.1 3.1-3.1h4V7H7c-2.76 0-5 2.24-5 5s2.24 5 5 5h4v-1.9H7c-1.71 0-3.1-1.39-3.1-3.1zM8 13h8v-2H8v2zm9-6h-4v1.9h4c1.71 0 3.1 1.39 3.1 3.1s-1.39 3.1-3.1 3.1h-4V17h4c2.76 0 5-2.24 5-5s-2.24-5-5-5z"/></svg>
<div class="r" style="left:1620px;top:377px;width:271px;height:1px;background:#bdbdbd;"></div>
<span class="t" style="left:1620px;top:362.4px;font-size:13px;color:#fff;font-weight:400;transform:translate(0,-50%);">0_userdata.0.Batterie1</span>
<span class="t" style="left:1876px;top:364px;font-size:13px;color:#4dabf5;font-weight:400;transform:translate(-50%,-50%);">...</span>
<span class="t" style="left:1620px;top:388px;font-size:12px;color:#fff;font-weight:400;transform:translate(0,-50%);font-style:italic;">Batterie1</span>
<span class="t" style="left:1426px;top:414.4px;font-size:13px;color:#fff;font-weight:400;transform:translate(0,-50%);letter-spacing:-0.24px;word-spacing:0.227px;">Voranstellen HTML</span>
<svg class="i" style="left:1599.8px;top:403.0px;" width="16" height="16" viewBox="0 0 24 24"><path fill="#fff" d="M3.9 12c0-1.71 1.39-3.1 3.1-3.1h4V7H7c-2.76 0-5 2.24-5 5s2.24 5 5 5h4v-1.9H7c-1.71 0-3.1-1.39-3.1-3.1zM8 13h8v-2H8v2zm9-6h-4v1.9h4c1.71 0 3.1 1.39 3.1 3.1s-1.39 3.1-3.1 3.1h-4V17h4c2.76 0 5-2.24 5-5s-2.24-5-5-5z"/></svg>
<div class="r" style="left:1620px;top:426px;width:271px;height:1px;background:#bdbdbd;"></div>
<span class="t" style="left:1620px;top:413.4px;font-size:13px;color:#fff;font-weight:400;transform:translate(0,-50%);">Aussensesor Garten</span>
<span class="t" style="left:1426px;top:448.4px;font-size:13px;color:#fff;font-weight:400;transform:translate(0,-50%);letter-spacing:-0.278px;word-spacing:0.258px;">HTML anhängen</span>
<svg class="i" style="left:1599.8px;top:437.0px;" width="16" height="16" viewBox="0 0 24 24"><path fill="#fff" d="M17 7h-4v1.9h4c1.71 0 3.1 1.39 3.1 3.1 0 1.43-.98 2.63-2.31 2.98l1.46 1.46C20.88 15.61 22 13.95 22 12c0-2.76-2.24-5-5-5zm-1 4h-2.19l2 2H16zM2 4.27l3.11 3.11C3.29 8.12 2 9.91 2 12c0 2.76 2.24 5 5 5h4v-1.9H7c-1.71 0-3.1-1.39-3.1-3.1 0-1.59 1.21-2.9 2.76-3.07L8.73 11H8v2h2.73L13 15.27V17h1.73l4.01 4L20 19.74 3.27 3 2 4.27z"/></svg>
<div class="r" style="left:1620px;top:462px;width:271px;height:1px;background:#bdbdbd;"></div>
<span class="t" style="left:1620px;top:446.5px;font-size:9.5px;color:#fff;font-weight:400;transform:translate(0,-50%);letter-spacing:0.15px;-webkit-text-stroke:0.3px #fff;">EDBE9992D89.0.OPERATING_VOLTAGE} Volt</span>
<div class="r" style="left:1827px;top:431px;width:64px;height:32px;background:#4dabf5;border-radius:4px;box-shadow:0 1px 3px rgba(0,0,0,.5);"></div>
<svg class="i" style="left:1848.0px;top:436.0px;" width="22" height="22" viewBox="0 0 24 24"><path fill="#111" d="M3.9 12c0-1.71 1.39-3.1 3.1-3.1h4V7H7c-2.76 0-5 2.24-5 5s2.24 5 5 5h4v-1.9H7c-1.71 0-3.1-1.39-3.1-3.1zM8 13h8v-2H8v2zm9-6h-4v1.9h4c1.71 0 3.1 1.39 3.1 3.1s-1.39 3.1-3.1 3.1h-4V17h4c2.76 0 5-2.24 5-5s-2.24-5-5-5z"/></svg>
<span class="t" style="left:1426px;top:481.4px;font-size:13px;color:#fff;font-weight:400;transform:translate(0,-50%);">Testtext</span>
<svg class="i" style="left:1599.8px;top:470.0px;" width="16" height="16" viewBox="0 0 24 24"><path fill="#fff" d="M3.9 12c0-1.71 1.39-3.1 3.1-3.1h4V7H7c-2.76 0-5 2.24-5 5s2.24 5 5 5h4v-1.9H7c-1.71 0-3.1-1.39-3.1-3.1zM8 13h8v-2H8v2zm9-6h-4v1.9h4c1.71 0 3.1 1.39 3.1 3.1s-1.39 3.1-3.1 3.1h-4V17h4c2.76 0 5-2.24 5-5s-2.24-5-5-5z"/></svg>
<div class="r" style="left:1620px;top:494px;width:271px;height:1px;background:#bdbdbd;"></div>
<span class="t" style="left:1426px;top:551.4px;font-size:13px;color:#fff;font-weight:400;transform:translate(0,-50%);">position</span>
<svg class="i" style="left:1599.8px;top:540.0px;" width="16" height="16" viewBox="0 0 24 24"><path fill="#fff" d="M3.9 12c0-1.71 1.39-3.1 3.1-3.1h4V7H7c-2.76 0-5 2.24-5 5s2.24 5 5 5h4v-1.9H7c-1.71 0-3.1-1.39-3.1-3.1zM8 13h8v-2H8v2zm9-6h-4v1.9h4c1.71 0 3.1 1.39 3.1 3.1s-1.39 3.1-3.1 3.1h-4V17h4c2.76 0 5-2.24 5-5s-2.24-5-5-5z"/></svg>
<div class="r" style="left:1620px;top:562px;width:271px;height:1px;background:#bdbdbd;"></div>
<span class="t" style="left:1620px;top:551.4px;font-size:13px;color:#fff;font-weight:400;transform:translate(0,-50%);">absolute</span>
<svg class="i" style="left:1867.8px;top:540.0px;" width="22" height="22" viewBox="0 0 24 24"><path fill="#fff" d="M7 10l5 5 5-5z"/></svg>
<span class="t" style="left:1426px;top:579.4px;font-size:13px;color:#fff;font-weight:400;transform:translate(0,-50%);">display</span>
<svg class="i" style="left:1599.8px;top:568.0px;" width="16" height="16" viewBox="0 0 24 24"><path fill="#fff" d="M3.9 12c0-1.71 1.39-3.1 3.1-3.1h4V7H7c-2.76 0-5 2.24-5 5s2.24 5 5 5h4v-1.9H7c-1.71 0-3.1-1.39-3.1-3.1zM8 13h8v-2H8v2zm9-6h-4v1.9h4c1.71 0 3.1 1.39 3.1 3.1s-1.39 3.1-3.1 3.1h-4V17h4c2.76 0 5-2.24 5-5s-2.24-5-5-5z"/></svg>
<div class="r" style="left:1620px;top:590px;width:271px;height:1px;background:#bdbdbd;"></div>
<svg class="i" style="left:1867.8px;top:568.0px;" width="22" height="22" viewBox="0 0 24 24"><path fill="#fff" d="M7 10l5 5 5-5z"/></svg>
<span class="t" style="left:1426px;top:611.4px;font-size:13px;color:#fff;font-weight:400;transform:translate(0,-50%);">links</span>
<svg class="i" style="left:1599.8px;top:600.0px;" width="16" height="16" viewBox="0 0 24 24"><path fill="#fff" d="M3.9 12c0-1.71 1.39-3.1 3.1-3.1h4V7H7c-2.76 0-5 2.24-5 5s2.24 5 5 5h4v-1.9H7c-1.71 0-3.1-1.39-3.1-3.1zM8 13h8v-2H8v2zm9-6h-4v1.9h4c1.71 0 3.1 1.39 3.1 3.1s-1.39 3.1-3.1 3.1h-4V17h4c2.76 0 5-2.24 5-5s-2.24-5-5-5z"/></svg>
<div class="r" style="left:1620px;top:624px;width:271px;height:1px;background:#bdbdbd;"></div>
<span class="t" style="left:1620px;top:609.4px;font-size:13px;color:#fff;font-weight:400;transform:translate(0,-50%);">860px</span>
<span class="t" style="left:1876px;top:610px;font-size:13px;color:#4dabf5;font-weight:400;transform:translate(-50%,-50%);">PX</span>
<span class="t" style="left:1426px;top:645.4px;font-size:13px;color:#fff;font-weight:400;transform:translate(0,-50%);">oben</span>
<svg class="i" style="left:1599.8px;top:634.0px;" width="16" height="16" viewBox="0 0 24 24"><path fill="#fff" d="M3.9 12c0-1.71 1.39-3.1 3.1-3.1h4V7H7c-2.76 0-5 2.24-5 5s2.24 5 5 5h4v-1.9H7c-1.71 0-3.1-1.39-3.1-3.1zM8 13h8v-2H8v2zm9-6h-4v1.9h4c1.71 0 3.1 1.39 3.1 3.1s-1.39 3.1-3.1 3.1h-4V17h4c2.76 0 5-2.24 5-5s-2.24-5-5-5z"/></svg>
<div class="r" style="left:1620px;top:659px;width:271px;height:1px;background:#bdbdbd;"></div>
<span class="t" style="left:1620px;top:644.4px;font-size:13px;color:#fff;font-weight:400;transform:translate(0,-50%);">4px</span>
<span class="t" style="left:1876px;top:645px;font-size:13px;color:#4dabf5;font-weight:400;transform:translate(-50%,-50%);">PX</span>
<span class="t" style="left:1426px;top:680.4px;font-size:13px;color:#fff;font-weight:400;transform:translate(0,-50%);">width</span>
<svg class="i" style="left:1599.8px;top:669.0px;" width="16" height="16" viewBox="0 0 24 24"><path fill="#fff" d="M3.9 12c0-1.71 1.39-3.1 3.1-3.1h4V7H7c-2.76 0-5 2.24-5 5s2.24 5 5 5h4v-1.9H7c-1.71 0-3.1-1.39-3.1-3.1zM8 13h8v-2H8v2zm9-6h-4v1.9h4c1.71 0 3.1 1.39 3.1 3.1s-1.39 3.1-3.1 3.1h-4V17h4c2.76 0 5-2.24 5-5s-2.24-5-5-5z"/></svg>
<div class="r" style="left:1620px;top:694px;width:271px;height:1px;background:#bdbdbd;"></div>
<span class="t" style="left:1620px;top:679.4px;font-size:13px;color:#fff;font-weight:400;transform:translate(0,-50%);">202px</span>
<span class="t" style="left:1876px;top:680px;font-size:13px;color:#4dabf5;font-weight:400;transform:translate(-50%,-50%);">PX</span>
<span class="t" style="left:1426px;top:715.4px;font-size:13px;color:#fff;font-weight:400;transform:translate(0,-50%);">Höhe</span>
<svg class="i" style="left:1599.8px;top:704.0px;" width="16" height="16" viewBox="0 0 24 24"><path fill="#fff" d="M3.9 12c0-1.71 1.39-3.1 3.1-3.1h4V7H7c-2.76 0-5 2.24-5 5s2.24 5 5 5h4v-1.9H7c-1.71 0-3.1-1.39-3.1-3.1zM8 13h8v-2H8v2zm9-6h-4v1.9h4c1.71 0 3.1 1.39 3.1 3.1s-1.39 3.1-3.1 3.1h-4V17h4c2.76 0 5-2.24 5-5s-2.24-5-5-5z"/></svg>
<div class="r" style="left:1620px;top:729px;width:271px;height:1px;background:#bdbdbd;"></div>
<span class="t" style="left:1620px;top:713.4px;font-size:13px;color:#fff;font-weight:400;transform:translate(0,-50%);">151px</span>
<span class="t" style="left:1876px;top:714px;font-size:13px;color:#4dabf5;font-weight:400;transform:translate(-50%,-50%);">PX</span>
<span class="t" style="left:1426px;top:748.4px;font-size:13px;color:#fff;font-weight:400;transform:translate(0,-50%);">z-index</span>
<svg class="i" style="left:1599.8px;top:737.0px;" width="16" height="16" viewBox="0 0 24 24"><path fill="#fff" d="M3.9 12c0-1.71 1.39-3.1 3.1-3.1h4V7H7c-2.76 0-5 2.24-5 5s2.24 5 5 5h4v-1.9H7c-1.71 0-3.1-1.39-3.1-3.1zM8 13h8v-2H8v2zm9-6h-4v1.9h4c1.71 0 3.1 1.39 3.1 3.1s-1.39 3.1-3.1 3.1h-4V17h4c2.76 0 5-2.24 5-5s-2.24-5-5-5z"/></svg>
<div class="r" style="left:1620px;top:760px;width:271px;height:1px;background:#bdbdbd;"></div>
<span class="t" style="left:1620px;top:746.4px;font-size:13px;color:#fff;font-weight:400;transform:translate(0,-50%);">4</span>
<div class="r" style="left:1873px;top:738px;width:18px;height:18px;background:#e9e9ef;border-radius:1px;"></div>
<svg class="i" style="left:1876.0px;top:736.8px;" width="12" height="12" viewBox="0 0 24 24"><path fill="#777" d="M7.41 15.41L12 10.83l4.59 4.58L18 14l-6-6-6 6z"/></svg>
<svg class="i" style="left:1876.0px;top:745.2px;" width="12" height="12" viewBox="0 0 24 24"><path fill="#777" d="M16.59 8.59L12 13.17 7.41 8.59 6 10l6 6 6-6z"/></svg>
<span class="t" style="left:1426px;top:778.4px;font-size:13px;color:#fff;font-weight:400;transform:translate(0,-50%);">overflow-x</span>
<svg class="i" style="left:1599.8px;top:767.0px;" width="16" height="16" viewBox="0 0 24 24"><path fill="#fff" d="M3.9 12c0-1.71 1.39-3.1 3.1-3.1h4V7H7c-2.76 0-5 2.24-5 5s2.24 5 5 5h4v-1.9H7c-1.71 0-3.1-1.39-3.1-3.1zM8 13h8v-2H8v2zm9-6h-4v1.9h4c1.71 0 3.1 1.39 3.1 3.1s-1.39 3.1-3.1 3.1h-4V17h4c2.76 0 5-2.24 5-5s-2.24-5-5-5z"/></svg>
<div class="r" style="left:1620px;top:788px;width:271px;height:1px;background:#bdbdbd;"></div>
<svg class="i" style="left:1867.8px;top:767.0px;" width="22" height="22" viewBox="0 0 24 24"><path fill="#fff" d="M7 10l5 5 5-5z"/></svg>
<span class="t" style="left:1426px;top:806.4px;font-size:13px;color:#fff;font-weight:400;transform:translate(0,-50%);">overflow-y</span>
<svg class="i" style="left:1599.8px;top:795.0px;" width="16" height="16" viewBox="0 0 24 24"><path fill="#fff" d="M3.9 12c0-1.71 1.39-3.1 3.1-3.1h4V7H7c-2.76 0-5 2.24-5 5s2.24 5 5 5h4v-1.9H7c-1.71 0-3.1-1.39-3.1-3.1zM8 13h8v-2H8v2zm9-6h-4v1.9h4c1.71 0 3.1 1.39 3.1 3.1s-1.39 3.1-3.1 3.1h-4V17h4c2.76 0 5-2.24 5-5s-2.24-5-5-5z"/></svg>
<div class="r" style="left:1620px;top:816px;width:271px;height:1px;background:#bdbdbd;"></div>
<svg class="i" style="left:1867.8px;top:795.0px;" width="22" height="22" viewBox="0 0 24 24"><path fill="#fff" d="M7 10l5 5 5-5z"/></svg>
<span class="t" style="left:1426px;top:835.4px;font-size:13px;color:#fff;font-weight:400;transform:translate(0,-50%);">opacity</span>
<svg class="i" style="left:1599.8px;top:824.0px;" width="16" height="16" viewBox="0 0 24 24"><path fill="#fff" d="M3.9 12c0-1.71 1.39-3.1 3.1-3.1h4V7H7c-2.76 0-5 2.24-5 5s2.24 5 5 5h4v-1.9H7c-1.71 0-3.1-1.39-3.1-3.1zM8 13h8v-2H8v2zm9-6h-4v1.9h4c1.71 0 3.1 1.39 3.1 3.1s-1.39 3.1-3.1 3.1h-4V17h4c2.76 0 5-2.24 5-5s-2.24-5-5-5z"/></svg>
<div class="r" style="left:1620px;top:847px;width:271px;height:1px;background:#bdbdbd;"></div>
<span class="t" style="left:1426px;top:866.4px;font-size:13px;color:#fff;font-weight:400;transform:translate(0,-50%);">Griff</span>
<svg class="i" style="left:1599.8px;top:855.0px;" width="16" height="16" viewBox="0 0 24 24"><path fill="#fff" d="M3.9 12c0-1.71 1.39-3.1 3.1-3.1h4V7H7c-2.76 0-5 2.24-5 5s2.24 5 5 5h4v-1.9H7c-1.71 0-3.1-1.39-3.1-3.1zM8 13h8v-2H8v2zm9-6h-4v1.9h4c1.71 0 3.1 1.39 3.1 3.1s-1.39 3.1-3.1 3.1h-4V17h4c2.76 0 5-2.24 5-5s-2.24-5-5-5z"/></svg>
<div class="r" style="left:1620px;top:878px;width:271px;height:1px;background:#bdbdbd;"></div>
<span class="t" style="left:1426px;top:897.4px;font-size:13px;color:#fff;font-weight:400;transform:translate(0,-50%);">Druckeffekt</span>
<svg class="i" style="left:1599.8px;top:886.0px;" width="16" height="16" viewBox="0 0 24 24"><path fill="#fff" d="M3.9 12c0-1.71 1.39-3.1 3.1-3.1h4V7H7c-2.76 0-5 2.24-5 5s2.24 5 5 5h4v-1.9H7c-1.71 0-3.1-1.39-3.1-3.1zM8 13h8v-2H8v2zm9-6h-4v1.9h4c1.71 0 3.1 1.39 3.1 3.1s-1.39 3.1-3.1 3.1h-4V17h4c2.76 0 5-2.24 5-5s-2.24-5-5-5z"/></svg>
<div class="r" style="left:1620px;top:909px;width:271px;height:1px;background:#bdbdbd;"></div>
<span class="t" style="left:1426px;top:972.4px;font-size:13px;color:#fff;font-weight:400;transform:translate(0,-50%);letter-spacing:-0.652px;">Farbe</span>
<svg class="i" style="left:1599.8px;top:961.0px;" width="16" height="16" viewBox="0 0 24 24"><path fill="#fff" d="M3.9 12c0-1.71 1.39-3.1 3.1-3.1h4V7H7c-2.76 0-5 2.24-5 5s2.24 5 5 5h4v-1.9H7c-1.71 0-3.1-1.39-3.1-3.1zM8 13h8v-2H8v2zm9-6h-4v1.9h4c1.71 0 3.1 1.39 3.1 3.1s-1.39 3.1-3.1 3.1h-4V17h4c2.76 0 5-2.24 5-5s-2.24-5-5-5z"/></svg>
<div class="r" style="left:1620px;top:981px;width:191px;height:1px;background:#bdbdbd;"></div>
<span class="t" style="left:1620px;top:967.4px;font-size:13px;color:#fff;font-weight:400;transform:translate(0,-50%);">rgba(255,255,255,1)</span>
<svg class="i" style="left:1816.0px;top:959.1px;" width="24" height="24" viewBox="0 0 24 24"><path fill="#fff" d="M6 19c0 1.1.9 2 2 2h8c1.1 0 2-.9 2-2V7H6v12zM19 4h-3.5l-1-1h-5l-1 1H5v2h14V4z"/></svg>
<div class="r" style="left:1845px;top:959px;width:46px;height:24px;background:#0d0d0d;border-radius:1px;"></div>
<div class="r" style="left:1850px;top:964px;width:36px;height:14px;background:#ffffff;border-radius:1.5px;"></div>
<span class="t" style="left:1426px;top:1005.4px;font-size:13px;color:#fff;font-weight:400;transform:translate(0,-50%);">text-align</span>
<svg class="i" style="left:1599.8px;top:994.0px;" width="16" height="16" viewBox="0 0 24 24"><path fill="#fff" d="M3.9 12c0-1.71 1.39-3.1 3.1-3.1h4V7H7c-2.76 0-5 2.24-5 5s2.24 5 5 5h4v-1.9H7c-1.71 0-3.1-1.39-3.1-3.1zM8 13h8v-2H8v2zm9-6h-4v1.9h4c1.71 0 3.1 1.39 3.1 3.1s-1.39 3.1-3.1 3.1h-4V17h4c2.76 0 5-2.24 5-5s-2.24-5-5-5z"/></svg>
<div class="r" style="left:1620px;top:1015px;width:271px;height:1px;background:#bdbdbd;"></div>
<span class="t" style="left:1620px;top:1004.4px;font-size:13px;color:#fff;font-weight:400;transform:translate(0,-50%);">center</span>
<svg class="i" style="left:1867.8px;top:994.3px;" width="22" height="22" viewBox="0 0 24 24"><path fill="#fff" d="M7 10l5 5 5-5z"/></svg>
<span class="t" style="left:1426px;top:1034.4px;font-size:13px;color:#fff;font-weight:400;transform:translate(0,-50%);">text-shadow</span>
<svg class="i" style="left:1599.8px;top:1023.0px;" width="16" height="16" viewBox="0 0 24 24"><path fill="#fff" d="M3.9 12c0-1.71 1.39-3.1 3.1-3.1h4V7H7c-2.76 0-5 2.24-5 5s2.24 5 5 5h4v-1.9H7c-1.71 0-3.1-1.39-3.1-3.1zM8 13h8v-2H8v2zm9-6h-4v1.9h4c1.71 0 3.1 1.39 3.1 3.1s-1.39 3.1-3.1 3.1h-4V17h4c2.76 0 5-2.24 5-5s-2.24-5-5-5z"/></svg>
<div class="r" style="left:1620px;top:1047px;width:271px;height:1px;background:#bdbdbd;"></div>
<span class="t" style="left:1426px;top:1065.4px;font-size:13px;color:#fff;font-weight:400;transform:translate(0,-50%);letter-spacing:0.185px;">font-family</span>
<svg class="i" style="left:1599.8px;top:1054.0px;" width="16" height="16" viewBox="0 0 24 24"><path fill="#fff" d="M3.9 12c0-1.71 1.39-3.1 3.1-3.1h4V7H7c-2.76 0-5 2.24-5 5s2.24 5 5 5h4v-1.9H7c-1.71 0-3.1-1.39-3.1-3.1zM8 13h8v-2H8v2zm9-6h-4v1.9h4c1.71 0 3.1 1.39 3.1 3.1s-1.39 3.1-3.1 3.1h-4V17h4c2.76 0 5-2.24 5-5s-2.24-5-5-5z"/></svg>
<div class="r" style="left:1620px;top:1078px;width:271px;height:1px;background:#bdbdbd;"></div>
</body></html>
